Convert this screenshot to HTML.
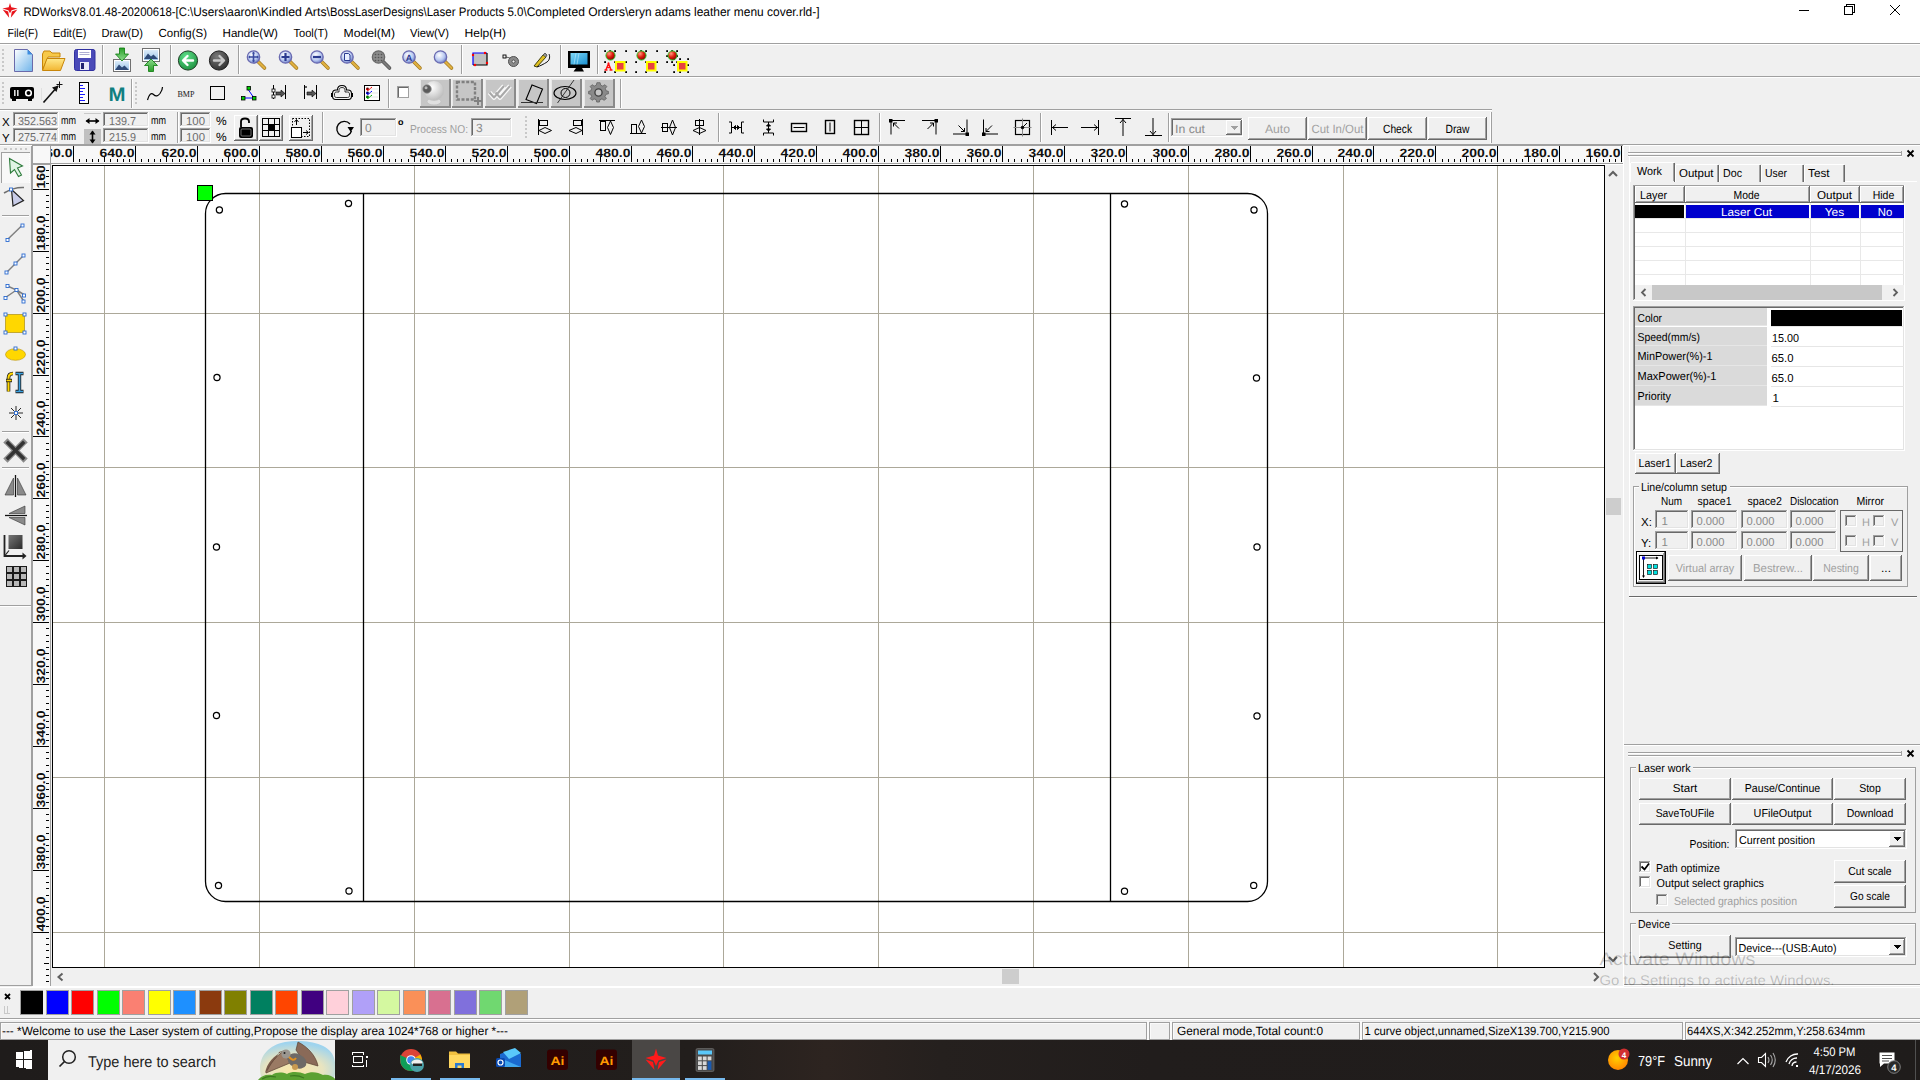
<!DOCTYPE html>
<html><head><meta charset="utf-8"><title>RDWorks</title>
<style>
html,body{margin:0;padding:0;width:1920px;height:1080px;overflow:hidden;background:#f0f0f0;}
svg{display:block;font-family:"Liberation Sans",sans-serif;}

</style></head>
<body>
<svg width="1920" height="1080" viewBox="0 0 1920 1080" shape-rendering="crispEdges" text-rendering="geometricPrecision">
<rect x="0" y="0" width="1920" height="1080" fill="#f0f0f0" />
<rect x="0" y="0" width="1920" height="42" fill="#ffffff" />
<g fill="#e8141b" shape-rendering="geometricPrecision"><path d="M10 3 L11.3 7.2 L17.6 8.6 L11.6 10.2 L10 13.2 L8.4 10.2 L2.4 8.6 L8.7 7.2 Z"/><path d="M2.6 9.6 L8.2 11.4 L9.2 17.8 Z"/><path d="M17.4 9.6 L11.8 11.4 L10.8 17.8 Z"/></g>
<text x="23.4" y="16" font-size="12.4" fill="#000" textLength="169.9" lengthAdjust="spacingAndGlyphs" >RDWorksV8.01.48-20200618-[C:\</text>
<text x="193.3" y="16" font-size="12.4" fill="#000" textLength="67.5" lengthAdjust="spacingAndGlyphs" >Users\aaron\</text>
<text x="260.8" y="16" font-size="12.4" fill="#000" textLength="69.2" lengthAdjust="spacingAndGlyphs" >Kindled Arts\</text>
<text x="330" y="16" font-size="12.4" fill="#000" textLength="96.7" lengthAdjust="spacingAndGlyphs" >BossLaserDesigns\</text>
<text x="426.7" y="16" font-size="12.4" fill="#000" textLength="100.0" lengthAdjust="spacingAndGlyphs" >Laser Products 5.0\</text>
<text x="526.7" y="16" font-size="12.4" fill="#000" textLength="101.6" lengthAdjust="spacingAndGlyphs" >Completed Orders\</text>
<text x="628.3" y="16" font-size="12.4" fill="#000" textLength="191.2" lengthAdjust="spacingAndGlyphs" >eryn adams leather menu cover.rld-]</text>
<g stroke="#000" stroke-width="1" fill="none"><path d="M1799 10.5 H1809"/><rect x="1844.5" y="6.5" width="8" height="8" fill="#fff"/><path d="M1846.5 6.5 V4.5 H1854.5 V12.5 H1852.5"/></g>
<g stroke="#000" stroke-width="1" shape-rendering="geometricPrecision"><path d="M1890 5 L1900 15 M1900 5 L1890 15"/></g>
<text x="7.5" y="36.5" font-size="11.8" fill="#000" textLength="30.5" lengthAdjust="spacingAndGlyphs" >File(F)</text>
<text x="53" y="36.5" font-size="11.8" fill="#000" textLength="33.5" lengthAdjust="spacingAndGlyphs" >Edit(E)</text>
<text x="101.5" y="36.5" font-size="11.8" fill="#000" textLength="41.5" lengthAdjust="spacingAndGlyphs" >Draw(D)</text>
<text x="158.5" y="36.5" font-size="11.8" fill="#000" textLength="48.5" lengthAdjust="spacingAndGlyphs" >Config(S)</text>
<text x="222.5" y="36.5" font-size="11.8" fill="#000" textLength="55.5" lengthAdjust="spacingAndGlyphs" >Handle(W)</text>
<text x="293.5" y="36.5" font-size="11.8" fill="#000" textLength="34.5" lengthAdjust="spacingAndGlyphs" >Tool(T)</text>
<text x="343.5" y="36.5" font-size="11.8" fill="#000" textLength="51.5" lengthAdjust="spacingAndGlyphs" >Model(M)</text>
<text x="410" y="36.5" font-size="11.8" fill="#000" textLength="39" lengthAdjust="spacingAndGlyphs" >View(V)</text>
<text x="464.5" y="36.5" font-size="11.8" fill="#000" textLength="41.5" lengthAdjust="spacingAndGlyphs" >Help(H)</text>
<rect x="0" y="42" width="1920" height="1" fill="#ffffff"/>
<rect x="0" y="43" width="1920" height="1" fill="#a0a0a0"/>
<rect x="0" y="44" width="1920" height="1" fill="#ffffff"/>
<rect x="0" y="76" width="1920" height="1" fill="#a0a0a0"/>
<rect x="0" y="77" width="1920" height="1" fill="#ffffff"/>
<rect x="0" y="109" width="1492" height="1" fill="#a0a0a0"/>
<rect x="0" y="110" width="1492" height="1" fill="#ffffff"/>
<rect x="0" y="144" width="1920" height="1" fill="#a0a0a0"/>
<rect x="0" y="145" width="1920" height="1" fill="#ffffff"/>
<rect x="31" y="146" width="1" height="840" fill="#a0a0a0"/>
<rect x="0" y="605" width="31" height="1" fill="#a0a0a0"/>
<rect x="0" y="606" width="31" height="1" fill="#ffffff"/>
<rect x="32" y="145" width="19" height="19" fill="#f8f8f8" />
<rect x="32" y="145" width="19" height="1" fill="#a0a0a0"/>
<rect x="32" y="145" width="1" height="19" fill="#a0a0a0"/>
<rect x="32" y="163" width="19" height="1" fill="#a0a0a0"/>
<rect x="32" y="164" width="19" height="1" fill="#ffffff"/>
<rect x="51" y="146" width="1572" height="17" fill="#f8f8f8" />
<rect x="51" y="145" width="1572" height="1" fill="#a0a0a0"/>
<rect x="50" y="145" width="1" height="19" fill="#a0a0a0"/>
<rect x="51" y="163" width="1572" height="1" fill="#a0a0a0"/>
<rect x="51" y="164" width="1572" height="1" fill="#ffffff"/>
<rect x="1623" y="145" width="1" height="19" fill="#ffffff"/>
<defs><clipPath id="hrc"><rect x="51" y="146" width="1572" height="17"/></clipPath><clipPath id="hrl"><rect x="52" y="146" width="1571" height="17"/></clipPath><clipPath id="vrc"><rect x="33" y="166" width="17" height="819"/></clipPath><clipPath id="cvc"><rect x="53" y="166" width="1551" height="801"/></clipPath></defs>
<g clip-path="url(#hrc)">
<rect x="73" y="146" width="1" height="16" fill="#000"/>
<rect x="79" y="159" width="1" height="3" fill="#000"/>
<rect x="86" y="159" width="1" height="3" fill="#000"/>
<rect x="92" y="159" width="1" height="3" fill="#000"/>
<rect x="98" y="159" width="1" height="3" fill="#000"/>
<rect x="104" y="156" width="1" height="6" fill="#000"/>
<rect x="110" y="159" width="1" height="3" fill="#000"/>
<rect x="117" y="159" width="1" height="3" fill="#000"/>
<rect x="123" y="159" width="1" height="3" fill="#000"/>
<rect x="129" y="159" width="1" height="3" fill="#000"/>
<rect x="135" y="146" width="1" height="16" fill="#000"/>
<rect x="141" y="159" width="1" height="3" fill="#000"/>
<rect x="148" y="159" width="1" height="3" fill="#000"/>
<rect x="154" y="159" width="1" height="3" fill="#000"/>
<rect x="160" y="159" width="1" height="3" fill="#000"/>
<rect x="166" y="156" width="1" height="6" fill="#000"/>
<rect x="172" y="159" width="1" height="3" fill="#000"/>
<rect x="179" y="159" width="1" height="3" fill="#000"/>
<rect x="185" y="159" width="1" height="3" fill="#000"/>
<rect x="191" y="159" width="1" height="3" fill="#000"/>
<rect x="197" y="146" width="1" height="16" fill="#000"/>
<rect x="203" y="159" width="1" height="3" fill="#000"/>
<rect x="209" y="159" width="1" height="3" fill="#000"/>
<rect x="216" y="159" width="1" height="3" fill="#000"/>
<rect x="222" y="159" width="1" height="3" fill="#000"/>
<rect x="228" y="156" width="1" height="6" fill="#000"/>
<rect x="234" y="159" width="1" height="3" fill="#000"/>
<rect x="240" y="159" width="1" height="3" fill="#000"/>
<rect x="247" y="159" width="1" height="3" fill="#000"/>
<rect x="253" y="159" width="1" height="3" fill="#000"/>
<rect x="259" y="146" width="1" height="16" fill="#000"/>
<rect x="265" y="159" width="1" height="3" fill="#000"/>
<rect x="271" y="159" width="1" height="3" fill="#000"/>
<rect x="278" y="159" width="1" height="3" fill="#000"/>
<rect x="284" y="159" width="1" height="3" fill="#000"/>
<rect x="290" y="156" width="1" height="6" fill="#000"/>
<rect x="296" y="159" width="1" height="3" fill="#000"/>
<rect x="302" y="159" width="1" height="3" fill="#000"/>
<rect x="309" y="159" width="1" height="3" fill="#000"/>
<rect x="315" y="159" width="1" height="3" fill="#000"/>
<rect x="321" y="146" width="1" height="16" fill="#000"/>
<rect x="327" y="159" width="1" height="3" fill="#000"/>
<rect x="333" y="159" width="1" height="3" fill="#000"/>
<rect x="340" y="159" width="1" height="3" fill="#000"/>
<rect x="346" y="159" width="1" height="3" fill="#000"/>
<rect x="352" y="156" width="1" height="6" fill="#000"/>
<rect x="358" y="159" width="1" height="3" fill="#000"/>
<rect x="364" y="159" width="1" height="3" fill="#000"/>
<rect x="370" y="159" width="1" height="3" fill="#000"/>
<rect x="377" y="159" width="1" height="3" fill="#000"/>
<rect x="383" y="146" width="1" height="16" fill="#000"/>
<rect x="389" y="159" width="1" height="3" fill="#000"/>
<rect x="395" y="159" width="1" height="3" fill="#000"/>
<rect x="401" y="159" width="1" height="3" fill="#000"/>
<rect x="408" y="159" width="1" height="3" fill="#000"/>
<rect x="414" y="156" width="1" height="6" fill="#000"/>
<rect x="420" y="159" width="1" height="3" fill="#000"/>
<rect x="426" y="159" width="1" height="3" fill="#000"/>
<rect x="432" y="159" width="1" height="3" fill="#000"/>
<rect x="439" y="159" width="1" height="3" fill="#000"/>
<rect x="445" y="146" width="1" height="16" fill="#000"/>
<rect x="451" y="159" width="1" height="3" fill="#000"/>
<rect x="457" y="159" width="1" height="3" fill="#000"/>
<rect x="463" y="159" width="1" height="3" fill="#000"/>
<rect x="470" y="159" width="1" height="3" fill="#000"/>
<rect x="476" y="156" width="1" height="6" fill="#000"/>
<rect x="482" y="159" width="1" height="3" fill="#000"/>
<rect x="488" y="159" width="1" height="3" fill="#000"/>
<rect x="494" y="159" width="1" height="3" fill="#000"/>
<rect x="500" y="159" width="1" height="3" fill="#000"/>
<rect x="507" y="146" width="1" height="16" fill="#000"/>
<rect x="513" y="159" width="1" height="3" fill="#000"/>
<rect x="519" y="159" width="1" height="3" fill="#000"/>
<rect x="525" y="159" width="1" height="3" fill="#000"/>
<rect x="531" y="159" width="1" height="3" fill="#000"/>
<rect x="538" y="156" width="1" height="6" fill="#000"/>
<rect x="544" y="159" width="1" height="3" fill="#000"/>
<rect x="550" y="159" width="1" height="3" fill="#000"/>
<rect x="556" y="159" width="1" height="3" fill="#000"/>
<rect x="562" y="159" width="1" height="3" fill="#000"/>
<rect x="569" y="146" width="1" height="16" fill="#000"/>
<rect x="575" y="159" width="1" height="3" fill="#000"/>
<rect x="581" y="159" width="1" height="3" fill="#000"/>
<rect x="587" y="159" width="1" height="3" fill="#000"/>
<rect x="593" y="159" width="1" height="3" fill="#000"/>
<rect x="600" y="156" width="1" height="6" fill="#000"/>
<rect x="606" y="159" width="1" height="3" fill="#000"/>
<rect x="612" y="159" width="1" height="3" fill="#000"/>
<rect x="618" y="159" width="1" height="3" fill="#000"/>
<rect x="624" y="159" width="1" height="3" fill="#000"/>
<rect x="631" y="146" width="1" height="16" fill="#000"/>
<rect x="637" y="159" width="1" height="3" fill="#000"/>
<rect x="643" y="159" width="1" height="3" fill="#000"/>
<rect x="649" y="159" width="1" height="3" fill="#000"/>
<rect x="655" y="159" width="1" height="3" fill="#000"/>
<rect x="661" y="156" width="1" height="6" fill="#000"/>
<rect x="668" y="159" width="1" height="3" fill="#000"/>
<rect x="674" y="159" width="1" height="3" fill="#000"/>
<rect x="680" y="159" width="1" height="3" fill="#000"/>
<rect x="686" y="159" width="1" height="3" fill="#000"/>
<rect x="692" y="146" width="1" height="16" fill="#000"/>
<rect x="699" y="159" width="1" height="3" fill="#000"/>
<rect x="705" y="159" width="1" height="3" fill="#000"/>
<rect x="711" y="159" width="1" height="3" fill="#000"/>
<rect x="717" y="159" width="1" height="3" fill="#000"/>
<rect x="723" y="156" width="1" height="6" fill="#000"/>
<rect x="730" y="159" width="1" height="3" fill="#000"/>
<rect x="736" y="159" width="1" height="3" fill="#000"/>
<rect x="742" y="159" width="1" height="3" fill="#000"/>
<rect x="748" y="159" width="1" height="3" fill="#000"/>
<rect x="754" y="146" width="1" height="16" fill="#000"/>
<rect x="761" y="159" width="1" height="3" fill="#000"/>
<rect x="767" y="159" width="1" height="3" fill="#000"/>
<rect x="773" y="159" width="1" height="3" fill="#000"/>
<rect x="779" y="159" width="1" height="3" fill="#000"/>
<rect x="785" y="156" width="1" height="6" fill="#000"/>
<rect x="791" y="159" width="1" height="3" fill="#000"/>
<rect x="798" y="159" width="1" height="3" fill="#000"/>
<rect x="804" y="159" width="1" height="3" fill="#000"/>
<rect x="810" y="159" width="1" height="3" fill="#000"/>
<rect x="816" y="146" width="1" height="16" fill="#000"/>
<rect x="822" y="159" width="1" height="3" fill="#000"/>
<rect x="829" y="159" width="1" height="3" fill="#000"/>
<rect x="835" y="159" width="1" height="3" fill="#000"/>
<rect x="841" y="159" width="1" height="3" fill="#000"/>
<rect x="847" y="156" width="1" height="6" fill="#000"/>
<rect x="853" y="159" width="1" height="3" fill="#000"/>
<rect x="860" y="159" width="1" height="3" fill="#000"/>
<rect x="866" y="159" width="1" height="3" fill="#000"/>
<rect x="872" y="159" width="1" height="3" fill="#000"/>
<rect x="878" y="146" width="1" height="16" fill="#000"/>
<rect x="884" y="159" width="1" height="3" fill="#000"/>
<rect x="891" y="159" width="1" height="3" fill="#000"/>
<rect x="897" y="159" width="1" height="3" fill="#000"/>
<rect x="903" y="159" width="1" height="3" fill="#000"/>
<rect x="909" y="156" width="1" height="6" fill="#000"/>
<rect x="915" y="159" width="1" height="3" fill="#000"/>
<rect x="922" y="159" width="1" height="3" fill="#000"/>
<rect x="928" y="159" width="1" height="3" fill="#000"/>
<rect x="934" y="159" width="1" height="3" fill="#000"/>
<rect x="940" y="146" width="1" height="16" fill="#000"/>
<rect x="946" y="159" width="1" height="3" fill="#000"/>
<rect x="952" y="159" width="1" height="3" fill="#000"/>
<rect x="959" y="159" width="1" height="3" fill="#000"/>
<rect x="965" y="159" width="1" height="3" fill="#000"/>
<rect x="971" y="156" width="1" height="6" fill="#000"/>
<rect x="977" y="159" width="1" height="3" fill="#000"/>
<rect x="983" y="159" width="1" height="3" fill="#000"/>
<rect x="990" y="159" width="1" height="3" fill="#000"/>
<rect x="996" y="159" width="1" height="3" fill="#000"/>
<rect x="1002" y="146" width="1" height="16" fill="#000"/>
<rect x="1008" y="159" width="1" height="3" fill="#000"/>
<rect x="1014" y="159" width="1" height="3" fill="#000"/>
<rect x="1021" y="159" width="1" height="3" fill="#000"/>
<rect x="1027" y="159" width="1" height="3" fill="#000"/>
<rect x="1033" y="156" width="1" height="6" fill="#000"/>
<rect x="1039" y="159" width="1" height="3" fill="#000"/>
<rect x="1045" y="159" width="1" height="3" fill="#000"/>
<rect x="1052" y="159" width="1" height="3" fill="#000"/>
<rect x="1058" y="159" width="1" height="3" fill="#000"/>
<rect x="1064" y="146" width="1" height="16" fill="#000"/>
<rect x="1070" y="159" width="1" height="3" fill="#000"/>
<rect x="1076" y="159" width="1" height="3" fill="#000"/>
<rect x="1082" y="159" width="1" height="3" fill="#000"/>
<rect x="1089" y="159" width="1" height="3" fill="#000"/>
<rect x="1095" y="156" width="1" height="6" fill="#000"/>
<rect x="1101" y="159" width="1" height="3" fill="#000"/>
<rect x="1107" y="159" width="1" height="3" fill="#000"/>
<rect x="1113" y="159" width="1" height="3" fill="#000"/>
<rect x="1120" y="159" width="1" height="3" fill="#000"/>
<rect x="1126" y="146" width="1" height="16" fill="#000"/>
<rect x="1132" y="159" width="1" height="3" fill="#000"/>
<rect x="1138" y="159" width="1" height="3" fill="#000"/>
<rect x="1144" y="159" width="1" height="3" fill="#000"/>
<rect x="1151" y="159" width="1" height="3" fill="#000"/>
<rect x="1157" y="156" width="1" height="6" fill="#000"/>
<rect x="1163" y="159" width="1" height="3" fill="#000"/>
<rect x="1169" y="159" width="1" height="3" fill="#000"/>
<rect x="1175" y="159" width="1" height="3" fill="#000"/>
<rect x="1182" y="159" width="1" height="3" fill="#000"/>
<rect x="1188" y="146" width="1" height="16" fill="#000"/>
<rect x="1194" y="159" width="1" height="3" fill="#000"/>
<rect x="1200" y="159" width="1" height="3" fill="#000"/>
<rect x="1206" y="159" width="1" height="3" fill="#000"/>
<rect x="1212" y="159" width="1" height="3" fill="#000"/>
<rect x="1219" y="156" width="1" height="6" fill="#000"/>
<rect x="1225" y="159" width="1" height="3" fill="#000"/>
<rect x="1231" y="159" width="1" height="3" fill="#000"/>
<rect x="1237" y="159" width="1" height="3" fill="#000"/>
<rect x="1243" y="159" width="1" height="3" fill="#000"/>
<rect x="1250" y="146" width="1" height="16" fill="#000"/>
<rect x="1256" y="159" width="1" height="3" fill="#000"/>
<rect x="1262" y="159" width="1" height="3" fill="#000"/>
<rect x="1268" y="159" width="1" height="3" fill="#000"/>
<rect x="1274" y="159" width="1" height="3" fill="#000"/>
<rect x="1281" y="156" width="1" height="6" fill="#000"/>
<rect x="1287" y="159" width="1" height="3" fill="#000"/>
<rect x="1293" y="159" width="1" height="3" fill="#000"/>
<rect x="1299" y="159" width="1" height="3" fill="#000"/>
<rect x="1305" y="159" width="1" height="3" fill="#000"/>
<rect x="1312" y="146" width="1" height="16" fill="#000"/>
<rect x="1318" y="159" width="1" height="3" fill="#000"/>
<rect x="1324" y="159" width="1" height="3" fill="#000"/>
<rect x="1330" y="159" width="1" height="3" fill="#000"/>
<rect x="1336" y="159" width="1" height="3" fill="#000"/>
<rect x="1343" y="156" width="1" height="6" fill="#000"/>
<rect x="1349" y="159" width="1" height="3" fill="#000"/>
<rect x="1355" y="159" width="1" height="3" fill="#000"/>
<rect x="1361" y="159" width="1" height="3" fill="#000"/>
<rect x="1367" y="159" width="1" height="3" fill="#000"/>
<rect x="1373" y="146" width="1" height="16" fill="#000"/>
<rect x="1380" y="159" width="1" height="3" fill="#000"/>
<rect x="1386" y="159" width="1" height="3" fill="#000"/>
<rect x="1392" y="159" width="1" height="3" fill="#000"/>
<rect x="1398" y="159" width="1" height="3" fill="#000"/>
<rect x="1404" y="156" width="1" height="6" fill="#000"/>
<rect x="1411" y="159" width="1" height="3" fill="#000"/>
<rect x="1417" y="159" width="1" height="3" fill="#000"/>
<rect x="1423" y="159" width="1" height="3" fill="#000"/>
<rect x="1429" y="159" width="1" height="3" fill="#000"/>
<rect x="1435" y="146" width="1" height="16" fill="#000"/>
<rect x="1442" y="159" width="1" height="3" fill="#000"/>
<rect x="1448" y="159" width="1" height="3" fill="#000"/>
<rect x="1454" y="159" width="1" height="3" fill="#000"/>
<rect x="1460" y="159" width="1" height="3" fill="#000"/>
<rect x="1466" y="156" width="1" height="6" fill="#000"/>
<rect x="1473" y="159" width="1" height="3" fill="#000"/>
<rect x="1479" y="159" width="1" height="3" fill="#000"/>
<rect x="1485" y="159" width="1" height="3" fill="#000"/>
<rect x="1491" y="159" width="1" height="3" fill="#000"/>
<rect x="1497" y="146" width="1" height="16" fill="#000"/>
<rect x="1503" y="159" width="1" height="3" fill="#000"/>
<rect x="1510" y="159" width="1" height="3" fill="#000"/>
<rect x="1516" y="159" width="1" height="3" fill="#000"/>
<rect x="1522" y="159" width="1" height="3" fill="#000"/>
<rect x="1528" y="156" width="1" height="6" fill="#000"/>
<rect x="1534" y="159" width="1" height="3" fill="#000"/>
<rect x="1541" y="159" width="1" height="3" fill="#000"/>
<rect x="1547" y="159" width="1" height="3" fill="#000"/>
<rect x="1553" y="159" width="1" height="3" fill="#000"/>
<rect x="1559" y="146" width="1" height="16" fill="#000"/>
<rect x="1565" y="159" width="1" height="3" fill="#000"/>
<rect x="1572" y="159" width="1" height="3" fill="#000"/>
<rect x="1578" y="159" width="1" height="3" fill="#000"/>
<rect x="1584" y="159" width="1" height="3" fill="#000"/>
<rect x="1590" y="156" width="1" height="6" fill="#000"/>
<rect x="1596" y="159" width="1" height="3" fill="#000"/>
<rect x="1603" y="159" width="1" height="3" fill="#000"/>
<rect x="1609" y="159" width="1" height="3" fill="#000"/>
<rect x="1615" y="159" width="1" height="3" fill="#000"/>
<rect x="1621" y="146" width="1" height="16" fill="#000"/>
<rect x="1627" y="159" width="1" height="3" fill="#000"/>
<rect x="1634" y="159" width="1" height="3" fill="#000"/>
<rect x="1640" y="159" width="1" height="3" fill="#000"/>
<rect x="1646" y="159" width="1" height="3" fill="#000"/>
<rect x="1652" y="156" width="1" height="6" fill="#000"/>
<text x="72.5" y="157" font-size="12" font-weight="bold" fill="#111" text-anchor="end" textLength="35" lengthAdjust="spacingAndGlyphs">660.0</text>
<text x="134.5" y="157" font-size="12" font-weight="bold" fill="#111" text-anchor="end" textLength="35" lengthAdjust="spacingAndGlyphs">640.0</text>
<text x="196.5" y="157" font-size="12" font-weight="bold" fill="#111" text-anchor="end" textLength="35" lengthAdjust="spacingAndGlyphs">620.0</text>
<text x="258.5" y="157" font-size="12" font-weight="bold" fill="#111" text-anchor="end" textLength="35" lengthAdjust="spacingAndGlyphs">600.0</text>
<text x="320.5" y="157" font-size="12" font-weight="bold" fill="#111" text-anchor="end" textLength="35" lengthAdjust="spacingAndGlyphs">580.0</text>
<text x="382.5" y="157" font-size="12" font-weight="bold" fill="#111" text-anchor="end" textLength="35" lengthAdjust="spacingAndGlyphs">560.0</text>
<text x="444.5" y="157" font-size="12" font-weight="bold" fill="#111" text-anchor="end" textLength="35" lengthAdjust="spacingAndGlyphs">540.0</text>
<text x="506.5" y="157" font-size="12" font-weight="bold" fill="#111" text-anchor="end" textLength="35" lengthAdjust="spacingAndGlyphs">520.0</text>
<text x="568.5" y="157" font-size="12" font-weight="bold" fill="#111" text-anchor="end" textLength="35" lengthAdjust="spacingAndGlyphs">500.0</text>
<text x="630.5" y="157" font-size="12" font-weight="bold" fill="#111" text-anchor="end" textLength="35" lengthAdjust="spacingAndGlyphs">480.0</text>
<text x="691.5" y="157" font-size="12" font-weight="bold" fill="#111" text-anchor="end" textLength="35" lengthAdjust="spacingAndGlyphs">460.0</text>
<text x="753.5" y="157" font-size="12" font-weight="bold" fill="#111" text-anchor="end" textLength="35" lengthAdjust="spacingAndGlyphs">440.0</text>
<text x="815.5" y="157" font-size="12" font-weight="bold" fill="#111" text-anchor="end" textLength="35" lengthAdjust="spacingAndGlyphs">420.0</text>
<text x="877.5" y="157" font-size="12" font-weight="bold" fill="#111" text-anchor="end" textLength="35" lengthAdjust="spacingAndGlyphs">400.0</text>
<text x="939.5" y="157" font-size="12" font-weight="bold" fill="#111" text-anchor="end" textLength="35" lengthAdjust="spacingAndGlyphs">380.0</text>
<text x="1001.5" y="157" font-size="12" font-weight="bold" fill="#111" text-anchor="end" textLength="35" lengthAdjust="spacingAndGlyphs">360.0</text>
<text x="1063.5" y="157" font-size="12" font-weight="bold" fill="#111" text-anchor="end" textLength="35" lengthAdjust="spacingAndGlyphs">340.0</text>
<text x="1125.5" y="157" font-size="12" font-weight="bold" fill="#111" text-anchor="end" textLength="35" lengthAdjust="spacingAndGlyphs">320.0</text>
<text x="1187.5" y="157" font-size="12" font-weight="bold" fill="#111" text-anchor="end" textLength="35" lengthAdjust="spacingAndGlyphs">300.0</text>
<text x="1249.5" y="157" font-size="12" font-weight="bold" fill="#111" text-anchor="end" textLength="35" lengthAdjust="spacingAndGlyphs">280.0</text>
<text x="1311.5" y="157" font-size="12" font-weight="bold" fill="#111" text-anchor="end" textLength="35" lengthAdjust="spacingAndGlyphs">260.0</text>
<text x="1372.5" y="157" font-size="12" font-weight="bold" fill="#111" text-anchor="end" textLength="35" lengthAdjust="spacingAndGlyphs">240.0</text>
<text x="1434.5" y="157" font-size="12" font-weight="bold" fill="#111" text-anchor="end" textLength="35" lengthAdjust="spacingAndGlyphs">220.0</text>
<text x="1496.5" y="157" font-size="12" font-weight="bold" fill="#111" text-anchor="end" textLength="35" lengthAdjust="spacingAndGlyphs">200.0</text>
<text x="1558.5" y="157" font-size="12" font-weight="bold" fill="#111" text-anchor="end" textLength="35" lengthAdjust="spacingAndGlyphs">180.0</text>
<text x="1620.5" y="157" font-size="12" font-weight="bold" fill="#111" text-anchor="end" textLength="35" lengthAdjust="spacingAndGlyphs">160.0</text>
</g>
<rect x="33" y="165" width="17" height="821" fill="#f8f8f8" />
<rect x="32" y="164" width="1" height="822" fill="#a0a0a0"/>
<rect x="32" y="164" width="19" height="1" fill="#a0a0a0"/>
<rect x="50" y="164" width="1" height="822" fill="#a0a0a0"/>
<rect x="51" y="164" width="1" height="822" fill="#f0f0f0"/>
<g clip-path="url(#vrc)">
<rect x="46" y="164" width="3" height="1" fill="#000"/>
<rect x="46" y="170" width="3" height="1" fill="#000"/>
<rect x="46" y="176" width="3" height="1" fill="#000"/>
<rect x="46" y="183" width="3" height="1" fill="#000"/>
<rect x="33" y="189" width="16" height="1" fill="#000"/>
<rect x="46" y="195" width="3" height="1" fill="#000"/>
<rect x="46" y="201" width="3" height="1" fill="#000"/>
<rect x="46" y="207" width="3" height="1" fill="#000"/>
<rect x="46" y="214" width="3" height="1" fill="#000"/>
<rect x="44" y="220" width="5" height="1" fill="#000"/>
<rect x="46" y="226" width="3" height="1" fill="#000"/>
<rect x="46" y="232" width="3" height="1" fill="#000"/>
<rect x="46" y="238" width="3" height="1" fill="#000"/>
<rect x="46" y="245" width="3" height="1" fill="#000"/>
<rect x="33" y="251" width="16" height="1" fill="#000"/>
<rect x="46" y="257" width="3" height="1" fill="#000"/>
<rect x="46" y="263" width="3" height="1" fill="#000"/>
<rect x="46" y="269" width="3" height="1" fill="#000"/>
<rect x="46" y="275" width="3" height="1" fill="#000"/>
<rect x="44" y="282" width="5" height="1" fill="#000"/>
<rect x="46" y="288" width="3" height="1" fill="#000"/>
<rect x="46" y="294" width="3" height="1" fill="#000"/>
<rect x="46" y="300" width="3" height="1" fill="#000"/>
<rect x="46" y="306" width="3" height="1" fill="#000"/>
<rect x="33" y="313" width="16" height="1" fill="#000"/>
<rect x="46" y="319" width="3" height="1" fill="#000"/>
<rect x="46" y="325" width="3" height="1" fill="#000"/>
<rect x="46" y="331" width="3" height="1" fill="#000"/>
<rect x="46" y="337" width="3" height="1" fill="#000"/>
<rect x="44" y="344" width="5" height="1" fill="#000"/>
<rect x="46" y="350" width="3" height="1" fill="#000"/>
<rect x="46" y="356" width="3" height="1" fill="#000"/>
<rect x="46" y="362" width="3" height="1" fill="#000"/>
<rect x="46" y="368" width="3" height="1" fill="#000"/>
<rect x="33" y="375" width="16" height="1" fill="#000"/>
<rect x="46" y="381" width="3" height="1" fill="#000"/>
<rect x="46" y="387" width="3" height="1" fill="#000"/>
<rect x="46" y="393" width="3" height="1" fill="#000"/>
<rect x="46" y="399" width="3" height="1" fill="#000"/>
<rect x="44" y="405" width="5" height="1" fill="#000"/>
<rect x="46" y="412" width="3" height="1" fill="#000"/>
<rect x="46" y="418" width="3" height="1" fill="#000"/>
<rect x="46" y="424" width="3" height="1" fill="#000"/>
<rect x="46" y="430" width="3" height="1" fill="#000"/>
<rect x="33" y="436" width="16" height="1" fill="#000"/>
<rect x="46" y="443" width="3" height="1" fill="#000"/>
<rect x="46" y="449" width="3" height="1" fill="#000"/>
<rect x="46" y="455" width="3" height="1" fill="#000"/>
<rect x="46" y="461" width="3" height="1" fill="#000"/>
<rect x="44" y="467" width="5" height="1" fill="#000"/>
<rect x="46" y="474" width="3" height="1" fill="#000"/>
<rect x="46" y="480" width="3" height="1" fill="#000"/>
<rect x="46" y="486" width="3" height="1" fill="#000"/>
<rect x="46" y="492" width="3" height="1" fill="#000"/>
<rect x="33" y="498" width="16" height="1" fill="#000"/>
<rect x="46" y="505" width="3" height="1" fill="#000"/>
<rect x="46" y="511" width="3" height="1" fill="#000"/>
<rect x="46" y="517" width="3" height="1" fill="#000"/>
<rect x="46" y="523" width="3" height="1" fill="#000"/>
<rect x="44" y="529" width="5" height="1" fill="#000"/>
<rect x="46" y="536" width="3" height="1" fill="#000"/>
<rect x="46" y="542" width="3" height="1" fill="#000"/>
<rect x="46" y="548" width="3" height="1" fill="#000"/>
<rect x="46" y="554" width="3" height="1" fill="#000"/>
<rect x="33" y="560" width="16" height="1" fill="#000"/>
<rect x="46" y="566" width="3" height="1" fill="#000"/>
<rect x="46" y="573" width="3" height="1" fill="#000"/>
<rect x="46" y="579" width="3" height="1" fill="#000"/>
<rect x="46" y="585" width="3" height="1" fill="#000"/>
<rect x="44" y="591" width="5" height="1" fill="#000"/>
<rect x="46" y="597" width="3" height="1" fill="#000"/>
<rect x="46" y="604" width="3" height="1" fill="#000"/>
<rect x="46" y="610" width="3" height="1" fill="#000"/>
<rect x="46" y="616" width="3" height="1" fill="#000"/>
<rect x="33" y="622" width="16" height="1" fill="#000"/>
<rect x="46" y="628" width="3" height="1" fill="#000"/>
<rect x="46" y="635" width="3" height="1" fill="#000"/>
<rect x="46" y="641" width="3" height="1" fill="#000"/>
<rect x="46" y="647" width="3" height="1" fill="#000"/>
<rect x="44" y="653" width="5" height="1" fill="#000"/>
<rect x="46" y="659" width="3" height="1" fill="#000"/>
<rect x="46" y="666" width="3" height="1" fill="#000"/>
<rect x="46" y="672" width="3" height="1" fill="#000"/>
<rect x="46" y="678" width="3" height="1" fill="#000"/>
<rect x="33" y="684" width="16" height="1" fill="#000"/>
<rect x="46" y="690" width="3" height="1" fill="#000"/>
<rect x="46" y="696" width="3" height="1" fill="#000"/>
<rect x="46" y="703" width="3" height="1" fill="#000"/>
<rect x="46" y="709" width="3" height="1" fill="#000"/>
<rect x="44" y="715" width="5" height="1" fill="#000"/>
<rect x="46" y="721" width="3" height="1" fill="#000"/>
<rect x="46" y="727" width="3" height="1" fill="#000"/>
<rect x="46" y="734" width="3" height="1" fill="#000"/>
<rect x="46" y="740" width="3" height="1" fill="#000"/>
<rect x="33" y="746" width="16" height="1" fill="#000"/>
<rect x="46" y="752" width="3" height="1" fill="#000"/>
<rect x="46" y="758" width="3" height="1" fill="#000"/>
<rect x="46" y="765" width="3" height="1" fill="#000"/>
<rect x="46" y="771" width="3" height="1" fill="#000"/>
<rect x="44" y="777" width="5" height="1" fill="#000"/>
<rect x="46" y="783" width="3" height="1" fill="#000"/>
<rect x="46" y="789" width="3" height="1" fill="#000"/>
<rect x="46" y="796" width="3" height="1" fill="#000"/>
<rect x="46" y="802" width="3" height="1" fill="#000"/>
<rect x="33" y="808" width="16" height="1" fill="#000"/>
<rect x="46" y="814" width="3" height="1" fill="#000"/>
<rect x="46" y="820" width="3" height="1" fill="#000"/>
<rect x="46" y="827" width="3" height="1" fill="#000"/>
<rect x="46" y="833" width="3" height="1" fill="#000"/>
<rect x="44" y="839" width="5" height="1" fill="#000"/>
<rect x="46" y="845" width="3" height="1" fill="#000"/>
<rect x="46" y="851" width="3" height="1" fill="#000"/>
<rect x="46" y="857" width="3" height="1" fill="#000"/>
<rect x="46" y="864" width="3" height="1" fill="#000"/>
<rect x="33" y="870" width="16" height="1" fill="#000"/>
<rect x="46" y="876" width="3" height="1" fill="#000"/>
<rect x="46" y="882" width="3" height="1" fill="#000"/>
<rect x="46" y="888" width="3" height="1" fill="#000"/>
<rect x="46" y="895" width="3" height="1" fill="#000"/>
<rect x="44" y="901" width="5" height="1" fill="#000"/>
<rect x="46" y="907" width="3" height="1" fill="#000"/>
<rect x="46" y="913" width="3" height="1" fill="#000"/>
<rect x="46" y="919" width="3" height="1" fill="#000"/>
<rect x="46" y="926" width="3" height="1" fill="#000"/>
<rect x="33" y="932" width="16" height="1" fill="#000"/>
<rect x="46" y="938" width="3" height="1" fill="#000"/>
<rect x="46" y="944" width="3" height="1" fill="#000"/>
<rect x="46" y="950" width="3" height="1" fill="#000"/>
<rect x="46" y="957" width="3" height="1" fill="#000"/>
<rect x="44" y="963" width="5" height="1" fill="#000"/>
<rect x="46" y="969" width="3" height="1" fill="#000"/>
<rect x="46" y="975" width="3" height="1" fill="#000"/>
<rect x="46" y="981" width="3" height="1" fill="#000"/>
<text transform="translate(44.5 188.5) rotate(-90)" font-size="12" font-weight="bold" fill="#111" textLength="35" lengthAdjust="spacingAndGlyphs">160.0</text>
<text transform="translate(44.5 250.5) rotate(-90)" font-size="12" font-weight="bold" fill="#111" textLength="35" lengthAdjust="spacingAndGlyphs">180.0</text>
<text transform="translate(44.5 312.5) rotate(-90)" font-size="12" font-weight="bold" fill="#111" textLength="35" lengthAdjust="spacingAndGlyphs">200.0</text>
<text transform="translate(44.5 374.5) rotate(-90)" font-size="12" font-weight="bold" fill="#111" textLength="35" lengthAdjust="spacingAndGlyphs">220.0</text>
<text transform="translate(44.5 435.5) rotate(-90)" font-size="12" font-weight="bold" fill="#111" textLength="35" lengthAdjust="spacingAndGlyphs">240.0</text>
<text transform="translate(44.5 497.5) rotate(-90)" font-size="12" font-weight="bold" fill="#111" textLength="35" lengthAdjust="spacingAndGlyphs">260.0</text>
<text transform="translate(44.5 559.5) rotate(-90)" font-size="12" font-weight="bold" fill="#111" textLength="35" lengthAdjust="spacingAndGlyphs">280.0</text>
<text transform="translate(44.5 621.5) rotate(-90)" font-size="12" font-weight="bold" fill="#111" textLength="35" lengthAdjust="spacingAndGlyphs">300.0</text>
<text transform="translate(44.5 683.5) rotate(-90)" font-size="12" font-weight="bold" fill="#111" textLength="35" lengthAdjust="spacingAndGlyphs">320.0</text>
<text transform="translate(44.5 745.5) rotate(-90)" font-size="12" font-weight="bold" fill="#111" textLength="35" lengthAdjust="spacingAndGlyphs">340.0</text>
<text transform="translate(44.5 807.5) rotate(-90)" font-size="12" font-weight="bold" fill="#111" textLength="35" lengthAdjust="spacingAndGlyphs">360.0</text>
<text transform="translate(44.5 869.5) rotate(-90)" font-size="12" font-weight="bold" fill="#111" textLength="35" lengthAdjust="spacingAndGlyphs">380.0</text>
<text transform="translate(44.5 931.5) rotate(-90)" font-size="12" font-weight="bold" fill="#111" textLength="35" lengthAdjust="spacingAndGlyphs">400.0</text>
</g>
<rect x="52" y="165" width="1553" height="803" fill="#000000" />
<rect x="53" y="166" width="1551" height="801" fill="#ffffff" />
<g clip-path="url(#cvc)">
<rect x="104" y="166" width="1" height="801" fill="#aca899"/>
<rect x="259" y="166" width="1" height="801" fill="#aca899"/>
<rect x="414" y="166" width="1" height="801" fill="#aca899"/>
<rect x="569" y="166" width="1" height="801" fill="#aca899"/>
<rect x="723" y="166" width="1" height="801" fill="#aca899"/>
<rect x="878" y="166" width="1" height="801" fill="#aca899"/>
<rect x="1033" y="166" width="1" height="801" fill="#aca899"/>
<rect x="1188" y="166" width="1" height="801" fill="#aca899"/>
<rect x="1343" y="166" width="1" height="801" fill="#aca899"/>
<rect x="1497" y="166" width="1" height="801" fill="#aca899"/>
<rect x="53" y="313" width="1551" height="1" fill="#aca899"/>
<rect x="53" y="467" width="1551" height="1" fill="#aca899"/>
<rect x="53" y="622" width="1551" height="1" fill="#aca899"/>
<rect x="53" y="777" width="1551" height="1" fill="#aca899"/>
<rect x="53" y="932" width="1551" height="1" fill="#aca899"/>
</g>
<g fill="none" stroke="#000" stroke-width="1.3" shape-rendering="geometricPrecision"><path d="M225.5 193.5 H1247.5 A20 20 0 0 1 1267.5 213.5 V881.5 A20 20 0 0 1 1247.5 901.5 H225.5 A20 20 0 0 1 205.5 881.5 V213.5 A20 20 0 0 1 225.5 193.5 Z"/><path d="M363.5 193.5 V901.5 M1110.5 193.5 V901.5"/></g>
<g fill="none" stroke="#000" stroke-width="1.2" shape-rendering="geometricPrecision"><circle cx="219.4" cy="210" r="3.1"/><circle cx="217" cy="377.5" r="3.1"/><circle cx="216.5" cy="547" r="3.1"/><circle cx="216.5" cy="715.5" r="3.1"/><circle cx="218.5" cy="885.5" r="3.1"/><circle cx="348.5" cy="203.5" r="3.1"/><circle cx="349" cy="891" r="3.1"/><circle cx="1124.5" cy="204" r="3.1"/><circle cx="1124.5" cy="891.3" r="3.1"/><circle cx="1254" cy="210" r="3.1"/><circle cx="1256.5" cy="378" r="3.1"/><circle cx="1257" cy="547" r="3.1"/><circle cx="1257" cy="716" r="3.1"/><circle cx="1253.7" cy="885.4" r="3.1"/></g>
<rect x="197.5" y="185.5" width="15" height="15" fill="#00ff00" stroke="#000" stroke-width="1.2" />
<rect x="1605" y="166" width="18" height="802" fill="#f0f0f0" />
<rect x="1606" y="498" width="15" height="17" fill="#cdcdcd" />
<path d="M1609 176 L1613 172 L1617 176" fill="none" stroke="#606060" stroke-width="2" shape-rendering="geometricPrecision"/>
<path d="M1609 957 L1613 961 L1617 957" fill="none" stroke="#606060" stroke-width="2" shape-rendering="geometricPrecision"/>
<rect x="52" y="968" width="1553" height="18" fill="#f0f0f0" />
<rect x="1002" y="969" width="17" height="15" fill="#cdcdcd" />
<path d="M62.5 973.5 L58.5 977 L62.5 980.5" fill="none" stroke="#606060" stroke-width="2" shape-rendering="geometricPrecision"/>
<path d="M1594 973 L1598 977 L1594 981" fill="none" stroke="#606060" stroke-width="2" shape-rendering="geometricPrecision"/>
<rect x="32" y="986" width="1592" height="1" fill="#ffffff"/>
<rect x="0" y="985" width="32" height="1" fill="#a0a0a0"/>
<defs><linearGradient id="gDoc" x1="0" y1="0" x2="1" y2="1"><stop offset="0" stop-color="#ffffff"/><stop offset="1" stop-color="#6fb4ea"/></linearGradient><linearGradient id="gFold" x1="0" y1="0" x2="0" y2="1"><stop offset="0" stop-color="#ffe98a"/><stop offset="1" stop-color="#f2b632"/></linearGradient><radialGradient id="gLens" cx="0.4" cy="0.35" r="0.7"><stop offset="0" stop-color="#ffffff"/><stop offset="0.6" stop-color="#b8c8f0"/><stop offset="1" stop-color="#6070c0"/></radialGradient><radialGradient id="gGreen" cx="0.4" cy="0.3" r="0.8"><stop offset="0" stop-color="#5ee08a"/><stop offset="1" stop-color="#1a8a3a"/></radialGradient><radialGradient id="gDark" cx="0.4" cy="0.3" r="0.8"><stop offset="0" stop-color="#7a7a7a"/><stop offset="1" stop-color="#2a2a2a"/></radialGradient><radialGradient id="gBall" cx="0.35" cy="0.3" r="0.75"><stop offset="0" stop-color="#ff9a80"/><stop offset="0.5" stop-color="#e02010"/><stop offset="1" stop-color="#800000"/></radialGradient><linearGradient id="gArrow" x1="0" y1="0" x2="0" y2="1"><stop offset="0" stop-color="#2aa02a"/><stop offset="1" stop-color="#8fdc8f"/></linearGradient><linearGradient id="gArrowU" x1="0" y1="1" x2="0" y2="0"><stop offset="0" stop-color="#2aa02a"/><stop offset="1" stop-color="#8fdc8f"/></linearGradient><linearGradient id="gPic" x1="0" y1="0" x2="0" y2="1"><stop offset="0" stop-color="#dcecfa"/><stop offset="1" stop-color="#9cc4e8"/></linearGradient><linearGradient id="gScreen" x1="0" y1="0" x2="1" y2="1"><stop offset="0" stop-color="#7fd8f8"/><stop offset="1" stop-color="#1a90d0"/></linearGradient><radialGradient id="gCam" cx="0.4" cy="0.35" r="0.7"><stop offset="0" stop-color="#ffffff"/><stop offset="1" stop-color="#b8b8b8"/></radialGradient></defs>
<rect x="2" y="49" width="2" height="2" fill="#c8c8c8"/><rect x="2" y="53" width="2" height="2" fill="#c8c8c8"/><rect x="2" y="57" width="2" height="2" fill="#c8c8c8"/><rect x="2" y="61" width="2" height="2" fill="#c8c8c8"/><rect x="2" y="65" width="2" height="2" fill="#c8c8c8"/><rect x="2" y="69" width="2" height="2" fill="#c8c8c8"/>
<g shape-rendering="geometricPrecision"><path d="M14.5 49.5 H27.5 L32.5 54.5 V71.5 H14.5 Z" fill="url(#gDoc)" stroke="#6a6aaa" stroke-width="1"/><path d="M27.5 49.5 V54.5 H32.5 Z" fill="#3d8ee0"/></g>
<g shape-rendering="geometricPrecision"><path d="M42.5 54 L44 51 H50 L52 53 H60 V57 H48 L42.5 70 Z" fill="#f7c94a" stroke="#c8860a"/><path d="M42.5 70.5 L47 58.5 H65 L60.5 70.5 Z" fill="url(#gFold)" stroke="#c8860a"/></g>
<g shape-rendering="geometricPrecision"><rect x="74.5" y="49.5" width="20.5" height="21" rx="2" fill="#4a4ab8" stroke="#3030a0"/><rect x="78" y="50" width="13" height="8" fill="#ffffff"/><path d="M79.5 52.5 H89.5 M79.5 54.5 H89.5" stroke="#9a9ac8" stroke-width="0.8"/><rect x="80" y="62" width="9" height="8" fill="#e8e8f8"/><rect x="81" y="63" width="3" height="6" fill="#202070"/></g>
<rect x="102" y="45" width="1" height="29" fill="#a0a0a0"/>
<rect x="103" y="45" width="1" height="29" fill="#ffffff"/>
<g shape-rendering="geometricPrecision"><rect x="113.5" y="59.5" width="17" height="12" fill="#fff" stroke="#707070"/><rect x="115" y="61" width="14" height="9" fill="url(#gPic)"/><path d="M115 70 L119 64.5 L122 67.5 L124.5 65.5 L129 70 Z" fill="#2e4a78"/><path d="M119.5 48 H124.5 V54 H128.5 L122 61 L115.5 54 H119.5 Z" fill="url(#gArrow)" stroke="#0a7a0a" stroke-width="0.8"/></g>
<g shape-rendering="geometricPrecision"><rect x="142.5" y="48.5" width="17" height="13" fill="#fff" stroke="#707070"/><rect x="144" y="50" width="14" height="10" fill="url(#gPic)"/><path d="M144 59 L148 53.5 L151 56.5 L153.5 54.5 L158 59 Z" fill="#2e4a78"/><path d="M148.5 71.5 H153.5 V65.5 H157.5 L151 59 L144.5 65.5 H148.5 Z" fill="url(#gArrowU)" stroke="#0a7a0a" stroke-width="0.8"/></g>
<rect x="170" y="45" width="1" height="29" fill="#a0a0a0"/>
<rect x="171" y="45" width="1" height="29" fill="#ffffff"/>
<g shape-rendering="geometricPrecision"><circle cx="188" cy="60.5" r="9.6" fill="url(#gGreen)" stroke="#1c3a22" stroke-width="1"/><path d="M183 60.5 L187.5 56 M183 60.5 L187.5 65 M183.5 60.5 H193" stroke="#fff" stroke-width="2.4" fill="none" stroke-linecap="round"/></g>
<g shape-rendering="geometricPrecision"><circle cx="219" cy="60.5" r="9.6" fill="url(#gDark)" stroke="#1a1a1a" stroke-width="1"/><path d="M224 60.5 L219.5 56 M224 60.5 L219.5 65 M223.5 60.5 H214" stroke="#c8c8c8" stroke-width="2.4" fill="none" stroke-linecap="round"/></g>
<rect x="238" y="45" width="1" height="29" fill="#a0a0a0"/>
<rect x="239" y="45" width="1" height="29" fill="#ffffff"/>
<g shape-rendering="geometricPrecision"><path d="M257.5 61 L264.5 68" stroke="#a07820" stroke-width="3.6" stroke-linecap="round"/><path d="M257.5 61 L264.5 68" stroke="#e0b040" stroke-width="2.2" stroke-linecap="round"/><circle cx="253.5" cy="57" r="6.2" fill="url(#gLens)" stroke="#6a6ab0" stroke-width="1.3"/><path d="M253.5 52.5 V61.5 M249 57 H258" stroke="#3a4aa0" stroke-width="1.6"/><path d="M253.5 51.5 L252 53.5 H255 Z M253.5 62.5 L252 60.5 H255 Z M248 57 L250 55.5 V58.5 Z M259 57 L257 55.5 V58.5 Z" fill="#3a4aa0"/></g>
<g shape-rendering="geometricPrecision"><path d="M289.5 61 L296.5 68" stroke="#a07820" stroke-width="3.6" stroke-linecap="round"/><path d="M289.5 61 L296.5 68" stroke="#e0b040" stroke-width="2.2" stroke-linecap="round"/><circle cx="285.5" cy="57" r="6.2" fill="url(#gLens)" stroke="#6a6ab0" stroke-width="1.3"/><path d="M285.5 53 V61 M281.5 57 H289.5" stroke="#2a3a90" stroke-width="2.2"/></g>
<g shape-rendering="geometricPrecision"><path d="M321 61 L328 68" stroke="#a07820" stroke-width="3.6" stroke-linecap="round"/><path d="M321 61 L328 68" stroke="#e0b040" stroke-width="2.2" stroke-linecap="round"/><circle cx="317" cy="57" r="6.2" fill="url(#gLens)" stroke="#6a6ab0" stroke-width="1.3"/><path d="M313 57 H321" stroke="#2a3a90" stroke-width="2.2"/></g>
<g shape-rendering="geometricPrecision"><path d="M351 61 L358 68" stroke="#a07820" stroke-width="3.6" stroke-linecap="round"/><path d="M351 61 L358 68" stroke="#e0b040" stroke-width="2.2" stroke-linecap="round"/><circle cx="347" cy="57" r="6.2" fill="url(#gLens)" stroke="#6a6ab0" stroke-width="1.3"/><path d="M344.5 53.5 H348.5 L350 55 V60.5 H344.5 Z" fill="#e8eeff" stroke="#2a3a90" stroke-width="1"/></g>
<g shape-rendering="geometricPrecision"><path d="M382.5 61 L389.5 68" stroke="#505050" stroke-width="3.6" stroke-linecap="round"/><path d="M382.5 61 L389.5 68" stroke="#7a7a7a" stroke-width="2.2" stroke-linecap="round"/><circle cx="378.5" cy="57" r="6.2" fill="#8a8a8a" stroke="#6a6a6a" stroke-width="1.3"/><g fill="#555"><circle cx="375.5" cy="54.5" r="0.8"/><circle cx="378.5" cy="54.5" r="0.8"/><circle cx="381.5" cy="54.5" r="0.8"/><circle cx="375.5" cy="57.5" r="0.8"/><circle cx="378.5" cy="57.5" r="0.8"/><circle cx="381.5" cy="57.5" r="0.8"/><circle cx="375.5" cy="60.5" r="0.8"/><circle cx="378.5" cy="60.5" r="0.8"/><circle cx="381.5" cy="60.5" r="0.8"/></g></g>
<g shape-rendering="geometricPrecision"><path d="M413 61 L420 68" stroke="#a07820" stroke-width="3.6" stroke-linecap="round"/><path d="M413 61 L420 68" stroke="#e0b040" stroke-width="2.2" stroke-linecap="round"/><circle cx="409" cy="57" r="6.2" fill="url(#gLens)" stroke="#6a6ab0" stroke-width="1.3"/><text x="409" y="61" font-size="9" font-weight="bold" fill="#2a3a90" text-anchor="middle">A</text></g>
<g shape-rendering="geometricPrecision"><path d="M444.5 61 L451.5 68" stroke="#a07820" stroke-width="3.6" stroke-linecap="round"/><path d="M444.5 61 L451.5 68" stroke="#e0b040" stroke-width="2.2" stroke-linecap="round"/><circle cx="440.5" cy="57" r="6.2" fill="url(#gLens)" stroke="#6a6ab0" stroke-width="1.3"/></g>
<rect x="461" y="45" width="1" height="29" fill="#a0a0a0"/>
<rect x="462" y="45" width="1" height="29" fill="#ffffff"/>
<g shape-rendering="geometricPrecision"><rect x="473" y="53" width="14" height="12" fill="#c0c0c0"/><path d="M473 65 V53 H487" stroke="#0000ff" stroke-width="1.2" fill="none"/><path d="M487 53 V65 H473" stroke="#000" stroke-width="1.2" fill="none"/><circle cx="473" cy="55" r="1.2" fill="#f00"/><circle cx="485" cy="53" r="1.2" fill="#f00"/><circle cx="487" cy="63" r="1.2" fill="#f00"/><circle cx="475" cy="65" r="1.2" fill="#f00"/></g>
<g shape-rendering="geometricPrecision"><rect x="503" y="55" width="3" height="3" fill="none" stroke="#000" stroke-width="0.9"/><path d="M506 57 L510 58" stroke="#000" stroke-width="0.6"/><circle cx="513.5" cy="61.5" r="5" fill="#8a8a8a" stroke="#505050"/><circle cx="513.5" cy="61.5" r="1.5" fill="#f0f0f0" stroke="#333" stroke-width="0.7"/></g>
<g shape-rendering="geometricPrecision"><path d="M534 66 L543 55 L546 57 L537 67 Z" fill="#e0c020" stroke="#303000" stroke-width="0.9"/><path d="M543 55 L545 53 L547 55 L546 57" fill="#909090" stroke="#333" stroke-width="0.7"/><path d="M537 67 C540 66 544 64 547 62 C550 60 550 56 549 54" fill="none" stroke="#111" stroke-width="1"/></g>
<rect x="560" y="45" width="1" height="29" fill="#a0a0a0"/>
<rect x="561" y="45" width="1" height="29" fill="#ffffff"/>
<g shape-rendering="geometricPrecision"><rect x="568" y="51" width="22" height="17" fill="#000"/><rect x="570.5" y="53" width="17" height="11.5" fill="url(#gScreen)"/><path d="M576 53 L574 64.5 M579 53 L577 64.5" stroke="#c8f0ff" stroke-width="0.8" opacity="0.7"/><path d="M576 68 H582 L584 71.5 H573.5 Z" fill="#000"/></g>
<rect x="597" y="45" width="1" height="29" fill="#a0a0a0"/>
<rect x="598" y="45" width="1" height="29" fill="#ffffff"/>
<g shape-rendering="geometricPrecision"><rect x="604.2" y="50.2" width="1.8" height="1.8" fill="#000"/><rect x="609.2" y="50.2" width="1.8" height="1.8" fill="#000"/><rect x="614.2" y="50.2" width="1.8" height="1.8" fill="#000"/><rect x="625.2" y="50.2" width="1.8" height="1.8" fill="#000"/><rect x="604.2" y="61.2" width="1.8" height="1.8" fill="#000"/><rect x="614.2" y="61.2" width="1.8" height="1.8" fill="#000"/><rect x="625.2" y="61.2" width="1.8" height="1.8" fill="#000"/><rect x="604.2" y="71.2" width="1.8" height="1.8" fill="#000"/><rect x="614.2" y="71.2" width="1.8" height="1.8" fill="#000"/><rect x="625.2" y="71.2" width="1.8" height="1.8" fill="#000"/><circle cx="610.5" cy="55.5" r="4.6" fill="url(#gBall)" stroke="#20d020" stroke-width="0.9"/><rect x="615" y="61" width="10.5" height="10.5" fill="#ffff00"/><rect x="617" y="63" width="6.5" height="6.5" fill="#e84040"/><path d="M604.5 70 H607.5 M609.5 70 H612.5 M605.8 70 L608.5 63.5 L611.2 70 M606.8 67.5 H610.2 M607.5 63.5 H609.5" stroke="#ff1010" stroke-width="1.3" fill="none"/></g>
<g shape-rendering="geometricPrecision"><rect x="635.2" y="50.2" width="1.8" height="1.8" fill="#000"/><rect x="640.2" y="50.2" width="1.8" height="1.8" fill="#000"/><rect x="645.2" y="50.2" width="1.8" height="1.8" fill="#000"/><rect x="656.2" y="50.2" width="1.8" height="1.8" fill="#000"/><rect x="635.2" y="61.2" width="1.8" height="1.8" fill="#000"/><rect x="645.2" y="61.2" width="1.8" height="1.8" fill="#000"/><rect x="656.2" y="61.2" width="1.8" height="1.8" fill="#000"/><rect x="635.2" y="71.2" width="1.8" height="1.8" fill="#000"/><rect x="645.2" y="71.2" width="1.8" height="1.8" fill="#000"/><rect x="656.2" y="71.2" width="1.8" height="1.8" fill="#000"/><circle cx="641.5" cy="55.5" r="4.6" fill="url(#gBall)" stroke="#20d020" stroke-width="0.9"/><rect x="646" y="61" width="10.5" height="10.5" fill="#ffff00"/><rect x="648" y="63" width="6.5" height="6.5" fill="#e84040"/></g>
<g shape-rendering="geometricPrecision"><rect x="666.2" y="50.2" width="1.8" height="1.8" fill="#000"/><rect x="671.2" y="50.2" width="1.8" height="1.8" fill="#000"/><rect x="676.2" y="50.2" width="1.8" height="1.8" fill="#000"/><rect x="666.2" y="55.2" width="1.8" height="1.8" fill="#000"/><rect x="676.2" y="55.2" width="1.8" height="1.8" fill="#000"/><rect x="666.2" y="61.2" width="1.8" height="1.8" fill="#000"/><rect x="671.2" y="61.2" width="1.8" height="1.8" fill="#000"/><rect x="676.2" y="61.2" width="1.8" height="1.8" fill="#000"/><rect x="673.2" y="58.2" width="1.8" height="1.8" fill="#000"/><rect x="679.2" y="58.2" width="1.8" height="1.8" fill="#000"/><rect x="687.2" y="58.2" width="1.8" height="1.8" fill="#000"/><rect x="673.2" y="64.2" width="1.8" height="1.8" fill="#000"/><rect x="687.2" y="64.2" width="1.8" height="1.8" fill="#000"/><rect x="673.2" y="71.2" width="1.8" height="1.8" fill="#000"/><rect x="679.2" y="71.2" width="1.8" height="1.8" fill="#000"/><rect x="687.2" y="71.2" width="1.8" height="1.8" fill="#000"/><circle cx="672.5" cy="55.5" r="4.6" fill="url(#gBall)" stroke="#20d020" stroke-width="0.9"/><rect x="677" y="61" width="10.5" height="10.5" fill="#ffff00"/><rect x="679" y="63" width="6.5" height="6.5" fill="#e84040"/></g>
<rect x="2" y="82" width="2" height="2" fill="#c8c8c8"/><rect x="2" y="86" width="2" height="2" fill="#c8c8c8"/><rect x="2" y="90" width="2" height="2" fill="#c8c8c8"/><rect x="2" y="94" width="2" height="2" fill="#c8c8c8"/><rect x="2" y="98" width="2" height="2" fill="#c8c8c8"/><rect x="2" y="102" width="2" height="2" fill="#c8c8c8"/>
<g shape-rendering="geometricPrecision"><rect x="10" y="87" width="24" height="12" rx="2" fill="#000"/><rect x="12" y="98" width="4" height="3" fill="#000"/><rect x="28" y="98" width="4" height="3" fill="#000"/><rect x="14" y="90" width="1.6" height="6" fill="#ddd"/><rect x="17" y="90" width="1.6" height="6" fill="#ddd"/><circle cx="28.5" cy="93" r="2.8" fill="none" stroke="#fff" stroke-width="1.6"/></g>
<rect x="41" y="88" width="1" height="12" fill="#e0e0e0"/>
<g shape-rendering="geometricPrecision"><path d="M43.5 102.5 L58 86" stroke="#111" stroke-width="1.6"/><path d="M58.5 85.5 L52 87.5 L56.5 92 Z" fill="#111"/><path d="M59.5 81.5 V88 M56.5 84.5 H62.5" stroke="#111" stroke-width="1"/></g>
<g shape-rendering="geometricPrecision"><rect x="79.5" y="82.5" width="9" height="21" fill="#fff" stroke="#000"/><path d="M80 85.5 H83 M80 88.5 H85 M80 91.5 H83 M80 94.5 H85 M80 97.5 H83 M80 100.5 H85" stroke="#0000ff" stroke-width="0.9"/></g>
<text x="117" y="101" font-size="19.5" fill="#108080" text-anchor="middle" font-weight="bold" textLength="17" lengthAdjust="spacingAndGlyphs" >M</text>
<rect x="131" y="79" width="1" height="29" fill="#a0a0a0"/>
<rect x="132" y="79" width="1" height="29" fill="#ffffff"/>
<rect x="135" y="82" width="2" height="2" fill="#c8c8c8"/><rect x="135" y="86" width="2" height="2" fill="#c8c8c8"/><rect x="135" y="90" width="2" height="2" fill="#c8c8c8"/><rect x="135" y="94" width="2" height="2" fill="#c8c8c8"/><rect x="135" y="98" width="2" height="2" fill="#c8c8c8"/><rect x="135" y="102" width="2" height="2" fill="#c8c8c8"/>
<g shape-rendering="geometricPrecision"><path d="M147.5 100 C149 95 151 92 153.5 94.5 C156 97 158 96 160 93.5 C161.5 91.5 162.5 89.5 162.5 87" fill="none" stroke="#000" stroke-width="1.2"/></g>
<text x="186" y="97" font-size="9" fill="#222" text-anchor="middle" font-family="Liberation Serif" textLength="17" lengthAdjust="spacingAndGlyphs" >BMP</text>
<rect x="210.5" y="86.5" width="14" height="13" fill="none" stroke="#000" stroke-width="1.2"/>
<g shape-rendering="geometricPrecision"><path d="M248.5 90 L254 98 H243" fill="none" stroke="#0000ff" stroke-width="1"/><rect x="247" y="86.5" width="3.5" height="3.5" fill="#00d000" stroke="#000" stroke-width="0.8"/><rect x="241.5" y="96.5" width="3.5" height="3.5" fill="#00d000" stroke="#000" stroke-width="0.8"/><rect x="252.5" y="96.5" width="3.5" height="3.5" fill="#00d000" stroke="#000" stroke-width="0.8"/></g>
<g shape-rendering="geometricPrecision"><path d="M273.5 85 V99 M285.5 85 V99" stroke="#000" stroke-width="1"/><rect x="272" y="89" width="3" height="3" fill="#fff" stroke="#000" stroke-width="0.8"/><rect x="272" y="95" width="3" height="3" fill="#fff" stroke="#000" stroke-width="0.8"/><path d="M276 92 H281 V90 L285 93.5 L281 97 V95 H276 Z" fill="#555" stroke="#000" stroke-width="0.6"/></g>
<g shape-rendering="geometricPrecision"><path d="M304.5 85 V99 M316.5 85 V99" stroke="#000" stroke-width="1"/><path d="M305 86 L307 88 M307 86 L305 88" stroke="#000" stroke-width="0.6"/><path d="M307 92 H312 V90 L316 93.5 L312 97 V95 H307 Z" fill="#555" stroke="#000" stroke-width="0.6"/></g>
<g shape-rendering="geometricPrecision" fill="none" stroke="#000" stroke-width="1.1"><path d="M335.5 99.5 H348.5 C350.5 99.5 351.5 98 351.5 96 V93.5 C351.5 91.5 350 90 348 90 H346.5 C346.5 87 345 85.5 342 85.5 C339 85.5 337.5 87 337.5 90 H336 C334 90 332.5 91.5 332.5 93.5 V96 C332.5 98 333.5 99.5 335.5 99.5 Z"/><path d="M336.5 97.5 H347.5 C349 97.5 349.5 96.5 349.5 95.5 V94 C349.5 92.8 348.8 92 347.5 92 H345 V90.5 C345 88.5 344 87.5 342 87.5 C340 87.5 339 88.5 339 90.5 V92 H336.5 C335.2 92 334.5 92.8 334.5 94 V95.5 C334.5 96.5 335 97.5 336.5 97.5 Z" stroke-width="0.8"/></g><rect x="331" y="92.5" width="2" height="4" fill="#000"/><rect x="351" y="92.5" width="2" height="4" fill="#000"/>
<g shape-rendering="geometricPrecision"><rect x="364.5" y="85.5" width="15" height="15" fill="#fff" stroke="#000"/><circle cx="367.5" cy="89" r="1.4" fill="#600"/><circle cx="367.5" cy="93" r="1.4" fill="#006"/><circle cx="367.5" cy="97" r="1.4" fill="#060"/><path d="M366 89 L368 90.5 L372 87" stroke="#f00" fill="none"/><path d="M366 93 L368 94.5 L372 91" stroke="#00f" fill="none"/><path d="M366 97 L368 98.5 L372 95" stroke="#0a0" fill="none"/><path d="M370 89 H378 M370 93 H378 M370 97 H378" stroke="#d0d0d0" stroke-width="0.6"/></g>
<rect x="388" y="79" width="1" height="29" fill="#a0a0a0"/>
<rect x="389" y="79" width="1" height="29" fill="#ffffff"/>
<rect x="397.5" y="86.5" width="11" height="11" fill="#fff" stroke="#a0a0a0"/>
<rect x="398" y="87" width="10" height="1" fill="#696969"/>
<rect x="398" y="87" width="1" height="10" fill="#696969"/>
<rect x="420" y="79" width="31" height="29" fill="#c6c6c6" />
<rect x="420" y="79" width="31" height="1" fill="#e8e8e8"/>
<rect x="420" y="79" width="1" height="29" fill="#e8e8e8"/>
<rect x="420" y="106" width="31" height="2" fill="#8a8a8a"/>
<rect x="449" y="79" width="2" height="29" fill="#8a8a8a"/>
<rect x="452" y="79" width="31" height="29" fill="#c6c6c6" />
<rect x="452" y="79" width="31" height="1" fill="#e8e8e8"/>
<rect x="452" y="79" width="1" height="29" fill="#e8e8e8"/>
<rect x="452" y="106" width="31" height="2" fill="#8a8a8a"/>
<rect x="481" y="79" width="2" height="29" fill="#8a8a8a"/>
<rect x="485" y="79" width="31" height="29" fill="#c6c6c6" />
<rect x="485" y="79" width="31" height="1" fill="#e8e8e8"/>
<rect x="485" y="79" width="1" height="29" fill="#e8e8e8"/>
<rect x="485" y="106" width="31" height="2" fill="#8a8a8a"/>
<rect x="514" y="79" width="2" height="29" fill="#8a8a8a"/>
<rect x="518" y="79" width="31" height="29" fill="#c6c6c6" />
<rect x="518" y="79" width="31" height="1" fill="#e8e8e8"/>
<rect x="518" y="79" width="1" height="29" fill="#e8e8e8"/>
<rect x="518" y="106" width="31" height="2" fill="#8a8a8a"/>
<rect x="547" y="79" width="2" height="29" fill="#8a8a8a"/>
<rect x="551" y="79" width="31" height="29" fill="#c6c6c6" />
<rect x="551" y="79" width="31" height="1" fill="#e8e8e8"/>
<rect x="551" y="79" width="1" height="29" fill="#e8e8e8"/>
<rect x="551" y="106" width="31" height="2" fill="#8a8a8a"/>
<rect x="580" y="79" width="2" height="29" fill="#8a8a8a"/>
<rect x="584" y="79" width="31" height="29" fill="#c6c6c6" />
<rect x="584" y="79" width="31" height="1" fill="#e8e8e8"/>
<rect x="584" y="79" width="1" height="29" fill="#e8e8e8"/>
<rect x="584" y="106" width="31" height="2" fill="#8a8a8a"/>
<rect x="613" y="79" width="2" height="29" fill="#8a8a8a"/>
<g shape-rendering="geometricPrecision"><ellipse cx="434" cy="101.5" rx="7" ry="3.5" fill="#e0e0e0" stroke="#c0c0c0" stroke-width="0.8"/><circle cx="434" cy="90.5" r="10" fill="url(#gCam)" stroke="#c4c4c4" stroke-width="0.8"/><circle cx="427" cy="89" r="4.3" fill="#5a5a5a" stroke="#999" stroke-width="0.8"/><circle cx="426" cy="87.8" r="1.5" fill="#b8b8b8"/></g>
<g shape-rendering="geometricPrecision"><rect x="457" y="82" width="18" height="17.5" fill="none" stroke="#808080" stroke-width="2.4" stroke-dasharray="3 1.6"/><path d="M478 97 V105 M474 101 H482" stroke="#808080" stroke-width="2"/></g>
<g shape-rendering="geometricPrecision"><path d="M489.5 92.5 L494 97.5 L504 86 M495.5 92.5 L500 97.5 L510 86" fill="none" stroke="#f8f8f8" stroke-width="4.6" stroke-linejoin="round"/><path d="M489.5 92.5 L494 97.5 L504 86 M495.5 92.5 L500 97.5 L510 86" fill="none" stroke="#a8a8a8" stroke-width="2" stroke-linejoin="round"/></g>
<g shape-rendering="geometricPrecision"><path d="M526 99.5 L532 85 L542.5 89 L536.5 103.5 Z" fill="none" stroke="#000" stroke-width="1.1"/><path d="M521 102.5 H543" stroke="#333" stroke-width="1"/></g>
<g shape-rendering="geometricPrecision"><ellipse cx="565" cy="93" rx="11" ry="6.5" fill="none" stroke="#000" stroke-width="1.1"/><circle cx="565.5" cy="93" r="4.5" fill="none" stroke="#000" stroke-width="1"/><path d="M557.5 103 L574 80" stroke="#111" stroke-width="0.8"/></g>
<g shape-rendering="geometricPrecision" transform="translate(598.5 92.5)"><path d="M-1.8 -9 H1.8 L2.4 -6.3 L4.8 -5.2 L7.2 -6.8 L9.2 -4.8 L7.6 -2.4 L8.6 0 L11 0.6 V3.4 L8.3 3.9 L7.2 6.3 L8.8 8.6 L6.2 10.6 L3.9 9 L1.6 9.9 L1 12.5 H-2 L-2.6 9.9 L-4.9 9 L-7.2 10.6 L-9.2 8.6 L-7.6 6.3 L-8.6 3.9 L-11 3.4 V0.6 L-8.6 0 L-7.6 -2.4 L-9.2 -4.8 L-7.2 -6.8 L-4.8 -5.2 L-2.4 -6.3 Z" transform="translate(0 -1.7) scale(0.9)" fill="#8a8a8a" stroke="#5a5a5a" stroke-width="0.8"/><circle cx="0" cy="0" r="3.6" fill="#c6c6c6" stroke="#444" stroke-width="1.4"/></g>
<rect x="620" y="79" width="1" height="29" fill="#a0a0a0"/>
<rect x="621" y="79" width="1" height="29" fill="#ffffff"/>
<text x="2" y="126" font-size="11.5" fill="#000" >X</text>
<text x="2" y="142" font-size="11.5" fill="#000" >Y</text>
<rect x="13" y="112" width="46" height="15" fill="#f0f0f0" />
<rect x="13" y="112" width="46" height="1" fill="#a0a0a0"/>
<rect x="13" y="112" width="1" height="15" fill="#a0a0a0"/>
<rect x="14" y="113" width="44" height="1" fill="#696969"/>
<rect x="14" y="113" width="1" height="13" fill="#696969"/>
<rect x="13" y="126" width="46" height="1" fill="#ffffff"/>
<rect x="58" y="112" width="1" height="15" fill="#ffffff"/>
<rect x="14" y="125" width="44" height="1" fill="#e3e3e3"/>
<rect x="57" y="113" width="1" height="13" fill="#e3e3e3"/>
<rect x="13" y="128" width="46" height="15" fill="#f0f0f0" />
<rect x="13" y="128" width="46" height="1" fill="#a0a0a0"/>
<rect x="13" y="128" width="1" height="15" fill="#a0a0a0"/>
<rect x="14" y="129" width="44" height="1" fill="#696969"/>
<rect x="14" y="129" width="1" height="13" fill="#696969"/>
<rect x="13" y="142" width="46" height="1" fill="#ffffff"/>
<rect x="58" y="128" width="1" height="15" fill="#ffffff"/>
<rect x="14" y="141" width="44" height="1" fill="#e3e3e3"/>
<rect x="57" y="129" width="1" height="13" fill="#e3e3e3"/>
<text x="18" y="124.5" font-size="11.5" fill="#6d6d6d" textLength="39" lengthAdjust="spacingAndGlyphs" >352.563</text>
<text x="18" y="140.5" font-size="11.5" fill="#6d6d6d" textLength="39" lengthAdjust="spacingAndGlyphs" >275.774</text>
<text x="61" y="124" font-size="11" fill="#000" textLength="15" lengthAdjust="spacingAndGlyphs" >mm</text>
<text x="61" y="140" font-size="11" fill="#000" textLength="15" lengthAdjust="spacingAndGlyphs" >mm</text>
<rect x="84" y="113" width="17" height="16" fill="#f0f0f0" />
<rect x="84" y="129" width="17" height="15" fill="#c0c0c0" />
<rect x="84" y="113" width="17" height="1" fill="#c8c8c8"/>
<g shape-rendering="geometricPrecision"><path d="M86.5 121 H98.5" stroke="#000" stroke-width="1.6"/><path d="M85.5 121 L89.5 118 V124 Z M99.5 121 L95.5 118 V124 Z" fill="#000"/><path d="M92.5 131.5 V142.5" stroke="#000" stroke-width="1.6"/><path d="M92.5 130.5 L89.5 134.5 H95.5 Z M92.5 143.5 L89.5 139.5 H95.5 Z" fill="#000"/></g>
<rect x="103" y="112" width="46" height="15" fill="#f0f0f0" />
<rect x="103" y="112" width="46" height="1" fill="#a0a0a0"/>
<rect x="103" y="112" width="1" height="15" fill="#a0a0a0"/>
<rect x="104" y="113" width="44" height="1" fill="#696969"/>
<rect x="104" y="113" width="1" height="13" fill="#696969"/>
<rect x="103" y="126" width="46" height="1" fill="#ffffff"/>
<rect x="148" y="112" width="1" height="15" fill="#ffffff"/>
<rect x="104" y="125" width="44" height="1" fill="#e3e3e3"/>
<rect x="147" y="113" width="1" height="13" fill="#e3e3e3"/>
<rect x="103" y="128" width="46" height="15" fill="#f0f0f0" />
<rect x="103" y="128" width="46" height="1" fill="#a0a0a0"/>
<rect x="103" y="128" width="1" height="15" fill="#a0a0a0"/>
<rect x="104" y="129" width="44" height="1" fill="#696969"/>
<rect x="104" y="129" width="1" height="13" fill="#696969"/>
<rect x="103" y="142" width="46" height="1" fill="#ffffff"/>
<rect x="148" y="128" width="1" height="15" fill="#ffffff"/>
<rect x="104" y="141" width="44" height="1" fill="#e3e3e3"/>
<rect x="147" y="129" width="1" height="13" fill="#e3e3e3"/>
<text x="109" y="124.5" font-size="11.5" fill="#6d6d6d" textLength="27" lengthAdjust="spacingAndGlyphs" >139.7</text>
<text x="109" y="140.5" font-size="11.5" fill="#6d6d6d" textLength="27" lengthAdjust="spacingAndGlyphs" >215.9</text>
<text x="151" y="124" font-size="11" fill="#000" textLength="15" lengthAdjust="spacingAndGlyphs" >mm</text>
<text x="151" y="140" font-size="11" fill="#000" textLength="15" lengthAdjust="spacingAndGlyphs" >mm</text>
<rect x="177" y="112" width="1" height="31" fill="#a0a0a0"/>
<rect x="178" y="112" width="1" height="31" fill="#ffffff"/>
<rect x="180" y="112" width="31" height="15" fill="#f0f0f0" />
<rect x="180" y="112" width="31" height="1" fill="#a0a0a0"/>
<rect x="180" y="112" width="1" height="15" fill="#a0a0a0"/>
<rect x="181" y="113" width="29" height="1" fill="#696969"/>
<rect x="181" y="113" width="1" height="13" fill="#696969"/>
<rect x="180" y="126" width="31" height="1" fill="#ffffff"/>
<rect x="210" y="112" width="1" height="15" fill="#ffffff"/>
<rect x="181" y="125" width="29" height="1" fill="#e3e3e3"/>
<rect x="209" y="113" width="1" height="13" fill="#e3e3e3"/>
<rect x="180" y="128" width="31" height="15" fill="#f0f0f0" />
<rect x="180" y="128" width="31" height="1" fill="#a0a0a0"/>
<rect x="180" y="128" width="1" height="15" fill="#a0a0a0"/>
<rect x="181" y="129" width="29" height="1" fill="#696969"/>
<rect x="181" y="129" width="1" height="13" fill="#696969"/>
<rect x="180" y="142" width="31" height="1" fill="#ffffff"/>
<rect x="210" y="128" width="1" height="15" fill="#ffffff"/>
<rect x="181" y="141" width="29" height="1" fill="#e3e3e3"/>
<rect x="209" y="129" width="1" height="13" fill="#e3e3e3"/>
<text x="186" y="124.5" font-size="11.5" fill="#6d6d6d" textLength="19" lengthAdjust="spacingAndGlyphs" >100</text>
<text x="186" y="140.5" font-size="11.5" fill="#6d6d6d" textLength="19" lengthAdjust="spacingAndGlyphs" >100</text>
<text x="216" y="125" font-size="12" fill="#000" >%</text>
<text x="216" y="141" font-size="12" fill="#000" >%</text>
<rect x="234" y="115" width="24" height="26" fill="#f0f0f0" />
<rect x="234" y="115" width="24" height="1" fill="#ffffff"/>
<rect x="234" y="115" width="1" height="26" fill="#ffffff"/>
<rect x="234" y="140" width="24" height="1" fill="#696969"/>
<rect x="257" y="115" width="1" height="26" fill="#696969"/>
<rect x="235" y="139" width="22" height="1" fill="#a0a0a0"/>
<rect x="256" y="116" width="1" height="24" fill="#a0a0a0"/>
<g shape-rendering="geometricPrecision"><rect x="239" y="127" width="14" height="11" rx="2" fill="#000"/><rect x="241" y="129" width="10" height="7" rx="1" fill="none" stroke="#888" stroke-width="0.8"/><path d="M241 127 V121.5 C241 119.5 242.5 118.5 245 118.5 C247.5 118.5 249 119.5 249 121.5 V123" fill="none" stroke="#000" stroke-width="1.8"/></g>
<rect x="259" y="115" width="24" height="26" fill="#f0f0f0" />
<rect x="259" y="115" width="24" height="1" fill="#ffffff"/>
<rect x="259" y="115" width="1" height="26" fill="#ffffff"/>
<rect x="259" y="140" width="24" height="1" fill="#696969"/>
<rect x="282" y="115" width="1" height="26" fill="#696969"/>
<rect x="260" y="139" width="22" height="1" fill="#a0a0a0"/>
<rect x="281" y="116" width="1" height="24" fill="#a0a0a0"/>
<g fill="none" stroke="#000" stroke-width="1"><rect x="262.5" y="118.5" width="17" height="18"/><path d="M268.5 118.5 V136.5 M274.5 118.5 V136.5 M262.5 124.5 H279.5 M262.5 130.5 H279.5"/></g>
<rect x="269" y="125" width="5" height="5" fill="#000" />
<rect x="289" y="115" width="24" height="26" fill="#f0f0f0" />
<rect x="289" y="115" width="24" height="1" fill="#ffffff"/>
<rect x="289" y="115" width="1" height="26" fill="#ffffff"/>
<rect x="289" y="140" width="24" height="1" fill="#696969"/>
<rect x="312" y="115" width="1" height="26" fill="#696969"/>
<rect x="290" y="139" width="22" height="1" fill="#a0a0a0"/>
<rect x="311" y="116" width="1" height="24" fill="#a0a0a0"/>
<g shape-rendering="geometricPrecision"><rect x="292.5" y="118.5" width="17" height="18" fill="none" stroke="#000" stroke-dasharray="1.5 1.5"/><rect x="291.5" y="127.5" width="10" height="10" fill="#fff" stroke="#000"/><path d="M296.5 125 V120 M294.5 122 L296.5 119.5 L298.5 122 M303 132.5 H308 M306 130.5 L308.5 132.5 L306 134.5" fill="none" stroke="#000"/></g>
<rect x="322" y="112" width="1" height="31" fill="#a0a0a0"/>
<rect x="323" y="112" width="1" height="31" fill="#ffffff"/>
<g shape-rendering="geometricPrecision"><path d="M350 124 A7.5 7.5 0 1 0 351.5 131" fill="none" stroke="#000" stroke-width="1.3"/><path d="M347.5 127 H354 L350.7 132 Z" fill="#000"/></g>
<rect x="360" y="118" width="37" height="19" fill="#f0f0f0" />
<rect x="360" y="118" width="37" height="1" fill="#a0a0a0"/>
<rect x="360" y="118" width="1" height="19" fill="#a0a0a0"/>
<rect x="361" y="119" width="35" height="1" fill="#696969"/>
<rect x="361" y="119" width="1" height="17" fill="#696969"/>
<rect x="360" y="136" width="37" height="1" fill="#ffffff"/>
<rect x="396" y="118" width="1" height="19" fill="#ffffff"/>
<rect x="361" y="135" width="35" height="1" fill="#e3e3e3"/>
<rect x="395" y="119" width="1" height="17" fill="#e3e3e3"/>
<text x="365" y="132" font-size="12" fill="#8a8a8a" >0</text>
<text x="398" y="125" font-size="9" fill="#000" font-weight="bold" >o</text>
<text x="410" y="133" font-size="11.5" fill="#a0a0a0" textLength="58" lengthAdjust="spacingAndGlyphs" >Process NO:</text>
<rect x="471" y="118" width="41" height="19" fill="#f0f0f0" />
<rect x="471" y="118" width="41" height="1" fill="#a0a0a0"/>
<rect x="471" y="118" width="1" height="19" fill="#a0a0a0"/>
<rect x="472" y="119" width="39" height="1" fill="#696969"/>
<rect x="472" y="119" width="1" height="17" fill="#696969"/>
<rect x="471" y="136" width="41" height="1" fill="#ffffff"/>
<rect x="511" y="118" width="1" height="19" fill="#ffffff"/>
<rect x="472" y="135" width="39" height="1" fill="#e3e3e3"/>
<rect x="510" y="119" width="1" height="17" fill="#e3e3e3"/>
<text x="476" y="132" font-size="12" fill="#8a8a8a" >3</text>
<rect x="525" y="116" width="2" height="2" fill="#c8c8c8"/><rect x="525" y="120" width="2" height="2" fill="#c8c8c8"/><rect x="525" y="124" width="2" height="2" fill="#c8c8c8"/><rect x="525" y="128" width="2" height="2" fill="#c8c8c8"/><rect x="525" y="132" width="2" height="2" fill="#c8c8c8"/><rect x="525" y="136" width="2" height="2" fill="#c8c8c8"/>
<g shape-rendering="geometricPrecision" fill="none" stroke="#000" stroke-width="1"><path d="M538.5 119 V135"/><rect x="539.5" y="120.5" width="8" height="5"/><path d="M539 130.5 L545 127.5 L551.5 130.5 L545 133.5 Z"/><path d="M582.5 119 V135"/><rect x="573.5" y="120.5" width="8" height="5"/><path d="M582 130.5 L576 127.5 L569 130.5 L576 133.5 Z"/><path d="M599 120.5 H615"/><rect x="600.5" y="121.5" width="5" height="9"/><path d="M610.5 121 L613.5 127.5 L610.5 134.5 L607.5 127.5 Z"/><path d="M630 133.5 H646"/><rect x="631.5" y="124.5" width="5" height="9"/><path d="M641.5 120 L644.5 126.5 L641.5 133 L638.5 126.5 Z"/><path d="M661 127.5 H677"/><rect x="662.5" y="123.5" width="5" height="8"/><path d="M672.5 120 L675.5 127.5 L672.5 135 L669.5 127.5 Z"/><path d="M699.5 119 V135"/><rect x="695.5" y="120.5" width="8" height="5"/><path d="M693 130.5 L699.5 127.5 L706 130.5 L699.5 133.5 Z"/></g>
<rect x="718" y="113" width="1" height="29" fill="#a0a0a0"/>
<rect x="719" y="113" width="1" height="29" fill="#ffffff"/>
<g shape-rendering="geometricPrecision" fill="none" stroke="#000" stroke-width="1"><path d="M729 122 H731.5 V133 H729 M744 122 H741.5 V133 H744 M731.5 127.5 H741.5"/><path d="M733.5 127.5 L735.5 125.5 V129.5 Z M739.5 127.5 L737.5 125.5 V129.5 Z" fill="#000"/><path d="M763.5 119.5 V122 H773.5 V119.5 M763.5 135.5 V133 H773.5 V135.5 M768.5 122 V133"/><path d="M768.5 124 L766.5 126 H770.5 Z M768.5 131 L766.5 129 H770.5 Z" fill="#000"/><rect x="791.5" y="123.5" width="15" height="8" stroke-width="1.4"/><path d="M793.5 127.5 H804.5"/><rect x="825.5" y="120.5" width="9" height="13" stroke-width="1.4"/><path d="M830 122.5 V131.5"/><rect x="854.5" y="120.5" width="14" height="14" stroke-width="1.4"/><path d="M861.5 120.5 V134.5 M854.5 127.5 H868.5"/></g>
<rect x="879" y="113" width="1" height="29" fill="#a0a0a0"/>
<rect x="880" y="113" width="1" height="29" fill="#ffffff"/>
<g shape-rendering="geometricPrecision" fill="none" stroke="#000" stroke-width="1"><path d="M891 134.5 V120.5 H905"/><path d="M893.5 123 L899 128.5 M893.5 123 H897 M893.5 123 V126.5"/><rect x="889.5" y="119.5" width="2.5" height="2.5" fill="#000"/><path d="M936 134.5 V120.5 H922"/><path d="M933.5 123 L927.5 129 M933.5 123 H930 M933.5 123 V126.5"/><rect x="935" y="119.5" width="2.5" height="2.5" fill="#000"/><path d="M967 119.5 V134 H953"/><path d="M964.5 131.5 L958.5 125.5 M964.5 131.5 H961 M964.5 131.5 V128"/><rect x="966" y="133" width="2.5" height="2.5" fill="#000"/><path d="M983.5 119.5 V134 H998"/><path d="M986 131.5 L992 125.5 M986 131.5 H989.5 M986 131.5 V128"/><rect x="982.5" y="133" width="2.5" height="2.5" fill="#000"/><rect x="1015.5" y="120.5" width="14" height="14" stroke-width="1.2"/><path d="M1022.5 118.5 V136.5 M1013.5 127.5 H1031.5" stroke="#888"/><path d="M1022.5 127.5 L1027 123"/><circle cx="1022.5" cy="127.5" r="1.3" fill="#000"/></g>
<rect x="1040" y="113" width="1" height="29" fill="#a0a0a0"/>
<rect x="1041" y="113" width="1" height="29" fill="#ffffff"/>
<g shape-rendering="geometricPrecision" fill="none" stroke="#000" stroke-width="1"><path d="M1051.5 120 V135 M1052 127.5 H1068"/><path d="M1052.5 127.5 L1056 124.5 M1052.5 127.5 L1056 130.5"/><path d="M1098.5 120 V135 M1081 127.5 H1098"/><path d="M1097.5 127.5 L1094 124.5 M1097.5 127.5 L1094 130.5"/><path d="M1115 118.5 H1131 M1123 119 V136"/><path d="M1123 119.5 L1120 123 M1123 119.5 L1126 123"/><path d="M1145 135.5 H1162 M1153 118 V135"/><path d="M1153 134.5 L1150 131 M1153 134.5 L1156 131"/></g>
<rect x="1168" y="113" width="1" height="29" fill="#a0a0a0"/>
<rect x="1169" y="113" width="1" height="29" fill="#ffffff"/>
<rect x="1171" y="118" width="72" height="19" fill="#f0f0f0" />
<rect x="1171" y="118" width="72" height="1" fill="#a0a0a0"/>
<rect x="1171" y="118" width="1" height="19" fill="#a0a0a0"/>
<rect x="1172" y="119" width="70" height="1" fill="#696969"/>
<rect x="1172" y="119" width="1" height="17" fill="#696969"/>
<rect x="1171" y="136" width="72" height="1" fill="#ffffff"/>
<rect x="1242" y="118" width="1" height="19" fill="#ffffff"/>
<rect x="1172" y="135" width="70" height="1" fill="#e3e3e3"/>
<rect x="1241" y="119" width="1" height="17" fill="#e3e3e3"/>
<rect x="1173" y="120" width="68" height="15" fill="#f0f0f0" />
<text x="1175" y="132.5" font-size="12" fill="#8a8a8a" textLength="30" lengthAdjust="spacingAndGlyphs" >In cut</text>
<rect x="1226" y="120" width="16" height="15" fill="#f0f0f0" />
<rect x="1226" y="120" width="16" height="1" fill="#ffffff"/>
<rect x="1226" y="120" width="1" height="15" fill="#ffffff"/>
<rect x="1226" y="134" width="16" height="1" fill="#696969"/>
<rect x="1241" y="120" width="1" height="15" fill="#696969"/>
<rect x="1227" y="133" width="14" height="1" fill="#a0a0a0"/>
<rect x="1240" y="121" width="1" height="13" fill="#a0a0a0"/>
<path d="M1230 126 H1238 L1234 130 Z" fill="#a0a0a0"/>
<rect x="1248" y="117" width="59" height="23" fill="#f0f0f0" />
<rect x="1248" y="117" width="59" height="1" fill="#ffffff"/>
<rect x="1248" y="117" width="1" height="23" fill="#ffffff"/>
<rect x="1248" y="139" width="59" height="1" fill="#696969"/>
<rect x="1306" y="117" width="1" height="23" fill="#696969"/>
<rect x="1249" y="138" width="57" height="1" fill="#a0a0a0"/>
<rect x="1305" y="118" width="1" height="21" fill="#a0a0a0"/>
<text x="1277.5" y="133" font-size="12" fill="#a0a0a0" text-anchor="middle" textLength="25" lengthAdjust="spacingAndGlyphs" >Auto</text>
<rect x="1308" y="117" width="59" height="23" fill="#f0f0f0" />
<rect x="1308" y="117" width="59" height="1" fill="#ffffff"/>
<rect x="1308" y="117" width="1" height="23" fill="#ffffff"/>
<rect x="1308" y="139" width="59" height="1" fill="#696969"/>
<rect x="1366" y="117" width="1" height="23" fill="#696969"/>
<rect x="1309" y="138" width="57" height="1" fill="#a0a0a0"/>
<rect x="1365" y="118" width="1" height="21" fill="#a0a0a0"/>
<text x="1337.5" y="133" font-size="12" fill="#a0a0a0" text-anchor="middle" textLength="52" lengthAdjust="spacingAndGlyphs" >Cut In/Out</text>
<rect x="1368" y="117" width="59" height="23" fill="#f0f0f0" />
<rect x="1368" y="117" width="59" height="1" fill="#ffffff"/>
<rect x="1368" y="117" width="1" height="23" fill="#ffffff"/>
<rect x="1368" y="139" width="59" height="1" fill="#696969"/>
<rect x="1426" y="117" width="1" height="23" fill="#696969"/>
<rect x="1369" y="138" width="57" height="1" fill="#a0a0a0"/>
<rect x="1425" y="118" width="1" height="21" fill="#a0a0a0"/>
<text x="1397.5" y="133" font-size="12" fill="#000" text-anchor="middle" textLength="29" lengthAdjust="spacingAndGlyphs" >Check</text>
<rect x="1428" y="117" width="59" height="23" fill="#f0f0f0" />
<rect x="1428" y="117" width="59" height="1" fill="#ffffff"/>
<rect x="1428" y="117" width="1" height="23" fill="#ffffff"/>
<rect x="1428" y="139" width="59" height="1" fill="#696969"/>
<rect x="1486" y="117" width="1" height="23" fill="#696969"/>
<rect x="1429" y="138" width="57" height="1" fill="#a0a0a0"/>
<rect x="1485" y="118" width="1" height="21" fill="#a0a0a0"/>
<text x="1457.5" y="133" font-size="12" fill="#000" text-anchor="middle" textLength="24" lengthAdjust="spacingAndGlyphs" >Draw</text>
<rect x="1490" y="112" width="1" height="31" fill="#ffffff"/>
<rect x="1491" y="112" width="1" height="31" fill="#a0a0a0"/>
<rect x="1624" y="146" width="296" height="838" fill="#f0f0f0" />
<rect x="1623" y="146" width="1" height="840" fill="#ffffff"/>
<rect x="1629" y="146" width="1" height="450" fill="#ffffff"/>
<rect x="1628" y="152" width="274" height="1" fill="#a0a0a0"/>
<rect x="1628" y="153" width="274" height="1" fill="#ffffff"/>
<rect x="1628" y="155" width="274" height="1" fill="#a0a0a0"/>
<rect x="1628" y="156" width="274" height="1" fill="#ffffff"/>
<rect x="1901" y="151" width="1" height="5" fill="#a0a0a0"/>
<path d="M1907.5 150.5 L1913.5 156.5 M1913.5 150.5 L1907.5 156.5" stroke="#000" stroke-width="1.8" shape-rendering="geometricPrecision"/>
<rect x="1630" y="181" width="287" height="1" fill="#ffffff"/>
<rect x="1675" y="164" width="44" height="18" fill="#f0f0f0" />
<rect x="1676" y="164" width="42" height="1" fill="#ffffff"/>
<rect x="1675" y="165" width="1" height="17" fill="#ffffff"/>
<rect x="1718" y="165" width="1" height="17" fill="#696969"/>
<rect x="1717" y="165" width="1" height="17" fill="#a0a0a0"/>
<text x="1679" y="177" font-size="11.5" fill="#000" textLength="34.5" lengthAdjust="spacingAndGlyphs" >Output</text>
<rect x="1719" y="164" width="42" height="18" fill="#f0f0f0" />
<rect x="1720" y="164" width="40" height="1" fill="#ffffff"/>
<rect x="1719" y="165" width="1" height="17" fill="#ffffff"/>
<rect x="1760" y="165" width="1" height="17" fill="#696969"/>
<rect x="1759" y="165" width="1" height="17" fill="#a0a0a0"/>
<text x="1723" y="177" font-size="11.5" fill="#000" textLength="19" lengthAdjust="spacingAndGlyphs" >Doc</text>
<rect x="1761" y="164" width="43" height="18" fill="#f0f0f0" />
<rect x="1762" y="164" width="41" height="1" fill="#ffffff"/>
<rect x="1761" y="165" width="1" height="17" fill="#ffffff"/>
<rect x="1803" y="165" width="1" height="17" fill="#696969"/>
<rect x="1802" y="165" width="1" height="17" fill="#a0a0a0"/>
<text x="1765" y="177" font-size="11.5" fill="#000" textLength="22" lengthAdjust="spacingAndGlyphs" >User</text>
<rect x="1804" y="164" width="41" height="18" fill="#f0f0f0" />
<rect x="1805" y="164" width="39" height="1" fill="#ffffff"/>
<rect x="1804" y="165" width="1" height="17" fill="#ffffff"/>
<rect x="1844" y="165" width="1" height="17" fill="#696969"/>
<rect x="1843" y="165" width="1" height="17" fill="#a0a0a0"/>
<text x="1808" y="177" font-size="11.5" fill="#000" textLength="21.6" lengthAdjust="spacingAndGlyphs" >Test</text>
<rect x="1630" y="162" width="45" height="20" fill="#f0f0f0" />
<rect x="1631" y="162" width="43" height="1" fill="#ffffff"/>
<rect x="1630" y="163" width="1" height="19" fill="#ffffff"/>
<rect x="1674" y="163" width="1" height="19" fill="#696969"/>
<rect x="1673" y="163" width="1" height="19" fill="#a0a0a0"/>
<text x="1637" y="175" font-size="11.5" fill="#000" textLength="25" lengthAdjust="spacingAndGlyphs" >Work</text>
<rect x="1631" y="181" width="43" height="2" fill="#f0f0f0" />
<rect x="1633" y="185" width="272" height="116" fill="#ffffff" />
<rect x="1633" y="185" width="272" height="1" fill="#a0a0a0"/>
<rect x="1633" y="185" width="1" height="116" fill="#a0a0a0"/>
<rect x="1634" y="186" width="270" height="1" fill="#696969"/>
<rect x="1634" y="186" width="1" height="114" fill="#696969"/>
<rect x="1633" y="300" width="272" height="1" fill="#ffffff"/>
<rect x="1904" y="185" width="1" height="116" fill="#ffffff"/>
<rect x="1634" y="299" width="270" height="1" fill="#e3e3e3"/>
<rect x="1903" y="186" width="1" height="114" fill="#e3e3e3"/>
<rect x="1635" y="186" width="50" height="17" fill="#f0f0f0" />
<rect x="1635" y="186" width="50" height="1" fill="#ffffff"/>
<rect x="1635" y="186" width="1" height="17" fill="#ffffff"/>
<rect x="1635" y="202" width="50" height="1" fill="#696969"/>
<rect x="1684" y="186" width="1" height="17" fill="#696969"/>
<rect x="1636" y="201" width="48" height="1" fill="#a0a0a0"/>
<rect x="1683" y="187" width="1" height="15" fill="#a0a0a0"/>
<text x="1640" y="198.5" font-size="11.5" fill="#000" textLength="27" lengthAdjust="spacingAndGlyphs" >Layer</text>
<rect x="1685" y="186" width="125" height="17" fill="#f0f0f0" />
<rect x="1685" y="186" width="125" height="1" fill="#ffffff"/>
<rect x="1685" y="186" width="1" height="17" fill="#ffffff"/>
<rect x="1685" y="202" width="125" height="1" fill="#696969"/>
<rect x="1809" y="186" width="1" height="17" fill="#696969"/>
<rect x="1686" y="201" width="123" height="1" fill="#a0a0a0"/>
<rect x="1808" y="187" width="1" height="15" fill="#a0a0a0"/>
<text x="1746.5" y="198.5" font-size="11.5" fill="#000" text-anchor="middle" textLength="26" lengthAdjust="spacingAndGlyphs" >Mode</text>
<rect x="1810" y="186" width="50" height="17" fill="#f0f0f0" />
<rect x="1810" y="186" width="50" height="1" fill="#ffffff"/>
<rect x="1810" y="186" width="1" height="17" fill="#ffffff"/>
<rect x="1810" y="202" width="50" height="1" fill="#696969"/>
<rect x="1859" y="186" width="1" height="17" fill="#696969"/>
<rect x="1811" y="201" width="48" height="1" fill="#a0a0a0"/>
<rect x="1858" y="187" width="1" height="15" fill="#a0a0a0"/>
<text x="1834.5" y="198.5" font-size="11.5" fill="#000" text-anchor="middle" textLength="35" lengthAdjust="spacingAndGlyphs" >Output</text>
<rect x="1860" y="186" width="44" height="17" fill="#f0f0f0" />
<rect x="1860" y="186" width="44" height="1" fill="#ffffff"/>
<rect x="1860" y="186" width="1" height="17" fill="#ffffff"/>
<rect x="1860" y="202" width="44" height="1" fill="#696969"/>
<rect x="1903" y="186" width="1" height="17" fill="#696969"/>
<rect x="1861" y="201" width="42" height="1" fill="#a0a0a0"/>
<rect x="1902" y="187" width="1" height="15" fill="#a0a0a0"/>
<text x="1883.5" y="198.5" font-size="11.5" fill="#000" text-anchor="middle" textLength="21.6" lengthAdjust="spacingAndGlyphs" >Hide</text>
<rect x="1635" y="218" width="269" height="1" fill="#e8e8e8"/>
<rect x="1635" y="232" width="269" height="1" fill="#e8e8e8"/>
<rect x="1635" y="246" width="269" height="1" fill="#e8e8e8"/>
<rect x="1635" y="260" width="269" height="1" fill="#e8e8e8"/>
<rect x="1635" y="274" width="269" height="1" fill="#e8e8e8"/>
<rect x="1685" y="203" width="1" height="82" fill="#e8e8e8"/>
<rect x="1810" y="203" width="1" height="82" fill="#e8e8e8"/>
<rect x="1860" y="203" width="1" height="82" fill="#e8e8e8"/>
<rect x="1635" y="205" width="49" height="13" fill="#000000" />
<rect x="1686" y="205" width="123" height="13" fill="#0000cd" />
<rect x="1811" y="205" width="48" height="13" fill="#0000cd" />
<rect x="1861" y="205" width="43" height="13" fill="#0000cd" />
<text x="1746.5" y="215.5" font-size="11.5" fill="#fff" text-anchor="middle" textLength="51" lengthAdjust="spacingAndGlyphs" >Laser Cut</text>
<text x="1834.5" y="215.5" font-size="11.5" fill="#fff" text-anchor="middle" textLength="19.5" lengthAdjust="spacingAndGlyphs" >Yes</text>
<text x="1885" y="215.5" font-size="11.5" fill="#fff" text-anchor="middle" textLength="14.5" lengthAdjust="spacingAndGlyphs" >No</text>
<rect x="1635" y="285" width="269" height="15" fill="#f0f0f0" />
<rect x="1652" y="285" width="230" height="15" fill="#c8c8c8" />
<path d="M1645.5 289 L1642 292.5 L1645.5 296" fill="none" stroke="#606060" stroke-width="1.8" shape-rendering="geometricPrecision"/>
<path d="M1893.5 289 L1897 292.5 L1893.5 296" fill="none" stroke="#606060" stroke-width="1.8" shape-rendering="geometricPrecision"/>
<rect x="1633" y="306" width="272" height="145" fill="#ffffff" />
<rect x="1633" y="306" width="272" height="1" fill="#a0a0a0"/>
<rect x="1633" y="306" width="1" height="145" fill="#a0a0a0"/>
<rect x="1634" y="307" width="270" height="1" fill="#696969"/>
<rect x="1634" y="307" width="1" height="143" fill="#696969"/>
<rect x="1633" y="450" width="272" height="1" fill="#ffffff"/>
<rect x="1904" y="306" width="1" height="145" fill="#ffffff"/>
<rect x="1634" y="449" width="270" height="1" fill="#e3e3e3"/>
<rect x="1903" y="307" width="1" height="143" fill="#e3e3e3"/>
<rect x="1635" y="308" width="132" height="18" fill="#dadada" />
<rect x="1635" y="325" width="132" height="1" fill="#e6e6e6"/>
<rect x="1771" y="326" width="133" height="1" fill="#e6e6e6"/>
<rect x="1635" y="327" width="132" height="19" fill="#dadada" />
<rect x="1635" y="345" width="132" height="1" fill="#e6e6e6"/>
<rect x="1771" y="346" width="133" height="1" fill="#e6e6e6"/>
<rect x="1635" y="346" width="132" height="20" fill="#dadada" />
<rect x="1635" y="365" width="132" height="1" fill="#e6e6e6"/>
<rect x="1771" y="366" width="133" height="1" fill="#e6e6e6"/>
<rect x="1635" y="366" width="132" height="20" fill="#dadada" />
<rect x="1635" y="385" width="132" height="1" fill="#e6e6e6"/>
<rect x="1771" y="386" width="133" height="1" fill="#e6e6e6"/>
<rect x="1635" y="386" width="132" height="20" fill="#dadada" />
<rect x="1635" y="405" width="132" height="1" fill="#e6e6e6"/>
<rect x="1771" y="406" width="133" height="1" fill="#e6e6e6"/>
<text x="1637.5" y="321.5" font-size="11.5" fill="#000" textLength="24.5" lengthAdjust="spacingAndGlyphs" >Color</text>
<text x="1637.5" y="340.5" font-size="11.5" fill="#000" textLength="62.5" lengthAdjust="spacingAndGlyphs" >Speed(mm/s)</text>
<text x="1637.5" y="359.5" font-size="11.5" fill="#000" textLength="75" lengthAdjust="spacingAndGlyphs" >MinPower(%)-1</text>
<text x="1637.5" y="379.5" font-size="11.5" fill="#000" textLength="79" lengthAdjust="spacingAndGlyphs" >MaxPower(%)-1</text>
<text x="1637.5" y="399.5" font-size="11.5" fill="#000" textLength="33.5" lengthAdjust="spacingAndGlyphs" >Priority</text>
<rect x="1771" y="310" width="131" height="16" fill="#000000" />
<text x="1772" y="342" font-size="11.5" fill="#000" textLength="27" lengthAdjust="spacingAndGlyphs" >15.00</text>
<text x="1771.5" y="362" font-size="11.5" fill="#000" textLength="22" lengthAdjust="spacingAndGlyphs" >65.0</text>
<text x="1771.5" y="382" font-size="11.5" fill="#000" textLength="22" lengthAdjust="spacingAndGlyphs" >65.0</text>
<text x="1772.5" y="402" font-size="11.5" fill="#000" >1</text>
<rect x="1635" y="453" width="41" height="21" fill="#f0f0f0" />
<rect x="1635" y="453" width="41" height="1" fill="#ffffff"/>
<rect x="1635" y="453" width="1" height="21" fill="#ffffff"/>
<rect x="1635" y="473" width="41" height="1" fill="#696969"/>
<rect x="1675" y="453" width="1" height="21" fill="#696969"/>
<rect x="1636" y="472" width="39" height="1" fill="#a0a0a0"/>
<rect x="1674" y="454" width="1" height="19" fill="#a0a0a0"/>
<rect x="1676" y="453" width="44" height="21" fill="#f0f0f0" />
<rect x="1676" y="453" width="44" height="1" fill="#ffffff"/>
<rect x="1676" y="453" width="1" height="21" fill="#ffffff"/>
<rect x="1676" y="473" width="44" height="1" fill="#696969"/>
<rect x="1719" y="453" width="1" height="21" fill="#696969"/>
<rect x="1677" y="472" width="42" height="1" fill="#a0a0a0"/>
<rect x="1718" y="454" width="1" height="19" fill="#a0a0a0"/>
<text x="1638.5" y="467" font-size="11.5" fill="#000" textLength="32.5" lengthAdjust="spacingAndGlyphs" >Laser1</text>
<text x="1680" y="467" font-size="11.5" fill="#000" textLength="32.5" lengthAdjust="spacingAndGlyphs" >Laser2</text>
<rect x="1633.5" y="486.5" width="274" height="100" fill="none" stroke="#a0a0a0"/>
<rect x="1634.5" y="487.5" width="273" height="99" fill="none" stroke="#ffffff" opacity="0.9"/>
<rect x="1633.5" y="486.5" width="274" height="100" fill="none" stroke="#a0a0a0"/>
<rect x="1639" y="479" width="91" height="12" fill="#f0f0f0" />
<text x="1641" y="490.5" font-size="11.5" fill="#000" textLength="86" lengthAdjust="spacingAndGlyphs" >Line/column setup</text>
<text x="1661" y="505" font-size="11.5" fill="#000" textLength="21" lengthAdjust="spacingAndGlyphs" >Num</text>
<text x="1697.5" y="505" font-size="11.5" fill="#000" textLength="34" lengthAdjust="spacingAndGlyphs" >space1</text>
<text x="1747.5" y="505" font-size="11.5" fill="#000" textLength="34.5" lengthAdjust="spacingAndGlyphs" >space2</text>
<text x="1790" y="505" font-size="11.5" fill="#000" textLength="48.5" lengthAdjust="spacingAndGlyphs" >Dislocation</text>
<rect x="1786" y="494" width="4" height="14" fill="#f0f0f0" />
<text x="1856.5" y="505" font-size="11.5" fill="#000" textLength="27.5" lengthAdjust="spacingAndGlyphs" >Mirror</text>
<text x="1641" y="526" font-size="11.5" fill="#000" >X:</text>
<text x="1641" y="547" font-size="11.5" fill="#000" >Y:</text>
<rect x="1655" y="510" width="34" height="19" fill="#f0f0f0" />
<rect x="1655" y="510" width="34" height="1" fill="#a0a0a0"/>
<rect x="1655" y="510" width="1" height="19" fill="#a0a0a0"/>
<rect x="1656" y="511" width="32" height="1" fill="#696969"/>
<rect x="1656" y="511" width="1" height="17" fill="#696969"/>
<rect x="1655" y="528" width="34" height="1" fill="#ffffff"/>
<rect x="1688" y="510" width="1" height="19" fill="#ffffff"/>
<rect x="1656" y="527" width="32" height="1" fill="#e3e3e3"/>
<rect x="1687" y="511" width="1" height="17" fill="#e3e3e3"/>
<rect x="1655" y="531" width="34" height="19" fill="#f0f0f0" />
<rect x="1655" y="531" width="34" height="1" fill="#a0a0a0"/>
<rect x="1655" y="531" width="1" height="19" fill="#a0a0a0"/>
<rect x="1656" y="532" width="32" height="1" fill="#696969"/>
<rect x="1656" y="532" width="1" height="17" fill="#696969"/>
<rect x="1655" y="549" width="34" height="1" fill="#ffffff"/>
<rect x="1688" y="531" width="1" height="19" fill="#ffffff"/>
<rect x="1656" y="548" width="32" height="1" fill="#e3e3e3"/>
<rect x="1687" y="532" width="1" height="17" fill="#e3e3e3"/>
<rect x="1691" y="510" width="47" height="19" fill="#f0f0f0" />
<rect x="1691" y="510" width="47" height="1" fill="#a0a0a0"/>
<rect x="1691" y="510" width="1" height="19" fill="#a0a0a0"/>
<rect x="1692" y="511" width="45" height="1" fill="#696969"/>
<rect x="1692" y="511" width="1" height="17" fill="#696969"/>
<rect x="1691" y="528" width="47" height="1" fill="#ffffff"/>
<rect x="1737" y="510" width="1" height="19" fill="#ffffff"/>
<rect x="1692" y="527" width="45" height="1" fill="#e3e3e3"/>
<rect x="1736" y="511" width="1" height="17" fill="#e3e3e3"/>
<rect x="1691" y="531" width="47" height="19" fill="#f0f0f0" />
<rect x="1691" y="531" width="47" height="1" fill="#a0a0a0"/>
<rect x="1691" y="531" width="1" height="19" fill="#a0a0a0"/>
<rect x="1692" y="532" width="45" height="1" fill="#696969"/>
<rect x="1692" y="532" width="1" height="17" fill="#696969"/>
<rect x="1691" y="549" width="47" height="1" fill="#ffffff"/>
<rect x="1737" y="531" width="1" height="19" fill="#ffffff"/>
<rect x="1692" y="548" width="45" height="1" fill="#e3e3e3"/>
<rect x="1736" y="532" width="1" height="17" fill="#e3e3e3"/>
<rect x="1741" y="510" width="47" height="19" fill="#f0f0f0" />
<rect x="1741" y="510" width="47" height="1" fill="#a0a0a0"/>
<rect x="1741" y="510" width="1" height="19" fill="#a0a0a0"/>
<rect x="1742" y="511" width="45" height="1" fill="#696969"/>
<rect x="1742" y="511" width="1" height="17" fill="#696969"/>
<rect x="1741" y="528" width="47" height="1" fill="#ffffff"/>
<rect x="1787" y="510" width="1" height="19" fill="#ffffff"/>
<rect x="1742" y="527" width="45" height="1" fill="#e3e3e3"/>
<rect x="1786" y="511" width="1" height="17" fill="#e3e3e3"/>
<rect x="1741" y="531" width="47" height="19" fill="#f0f0f0" />
<rect x="1741" y="531" width="47" height="1" fill="#a0a0a0"/>
<rect x="1741" y="531" width="1" height="19" fill="#a0a0a0"/>
<rect x="1742" y="532" width="45" height="1" fill="#696969"/>
<rect x="1742" y="532" width="1" height="17" fill="#696969"/>
<rect x="1741" y="549" width="47" height="1" fill="#ffffff"/>
<rect x="1787" y="531" width="1" height="19" fill="#ffffff"/>
<rect x="1742" y="548" width="45" height="1" fill="#e3e3e3"/>
<rect x="1786" y="532" width="1" height="17" fill="#e3e3e3"/>
<rect x="1790" y="510" width="47" height="19" fill="#f0f0f0" />
<rect x="1790" y="510" width="47" height="1" fill="#a0a0a0"/>
<rect x="1790" y="510" width="1" height="19" fill="#a0a0a0"/>
<rect x="1791" y="511" width="45" height="1" fill="#696969"/>
<rect x="1791" y="511" width="1" height="17" fill="#696969"/>
<rect x="1790" y="528" width="47" height="1" fill="#ffffff"/>
<rect x="1836" y="510" width="1" height="19" fill="#ffffff"/>
<rect x="1791" y="527" width="45" height="1" fill="#e3e3e3"/>
<rect x="1835" y="511" width="1" height="17" fill="#e3e3e3"/>
<rect x="1790" y="531" width="47" height="19" fill="#f0f0f0" />
<rect x="1790" y="531" width="47" height="1" fill="#a0a0a0"/>
<rect x="1790" y="531" width="1" height="19" fill="#a0a0a0"/>
<rect x="1791" y="532" width="45" height="1" fill="#696969"/>
<rect x="1791" y="532" width="1" height="17" fill="#696969"/>
<rect x="1790" y="549" width="47" height="1" fill="#ffffff"/>
<rect x="1836" y="531" width="1" height="19" fill="#ffffff"/>
<rect x="1791" y="548" width="45" height="1" fill="#e3e3e3"/>
<rect x="1835" y="532" width="1" height="17" fill="#e3e3e3"/>
<text x="1661.5" y="524.5" font-size="11.5" fill="#8a8a8a" >1</text>
<text x="1661.5" y="545.5" font-size="11.5" fill="#8a8a8a" >1</text>
<text x="1696.5" y="524.5" font-size="11.5" fill="#8a8a8a" textLength="28" lengthAdjust="spacingAndGlyphs" >0.000</text>
<text x="1696.5" y="545.5" font-size="11.5" fill="#8a8a8a" textLength="28" lengthAdjust="spacingAndGlyphs" >0.000</text>
<text x="1746.5" y="524.5" font-size="11.5" fill="#8a8a8a" textLength="28" lengthAdjust="spacingAndGlyphs" >0.000</text>
<text x="1746.5" y="545.5" font-size="11.5" fill="#8a8a8a" textLength="28" lengthAdjust="spacingAndGlyphs" >0.000</text>
<text x="1795.5" y="524.5" font-size="11.5" fill="#8a8a8a" textLength="28" lengthAdjust="spacingAndGlyphs" >0.000</text>
<text x="1795.5" y="545.5" font-size="11.5" fill="#8a8a8a" textLength="28" lengthAdjust="spacingAndGlyphs" >0.000</text>
<rect x="1840.5" y="510.5" width="62" height="41" fill="none" stroke="#696969"/>
<rect x="1845" y="515" width="12" height="12" fill="#f0f0f0" />
<rect x="1845" y="515" width="12" height="1" fill="#a0a0a0"/>
<rect x="1845" y="515" width="1" height="12" fill="#a0a0a0"/>
<rect x="1846" y="516" width="10" height="1" fill="#696969"/>
<rect x="1846" y="516" width="1" height="10" fill="#696969"/>
<rect x="1845" y="526" width="12" height="1" fill="#ffffff"/>
<rect x="1856" y="515" width="1" height="12" fill="#ffffff"/>
<rect x="1846" y="525" width="10" height="1" fill="#e3e3e3"/>
<rect x="1855" y="516" width="1" height="10" fill="#e3e3e3"/>
<rect x="1873" y="515" width="12" height="12" fill="#f0f0f0" />
<rect x="1873" y="515" width="12" height="1" fill="#a0a0a0"/>
<rect x="1873" y="515" width="1" height="12" fill="#a0a0a0"/>
<rect x="1874" y="516" width="10" height="1" fill="#696969"/>
<rect x="1874" y="516" width="1" height="10" fill="#696969"/>
<rect x="1873" y="526" width="12" height="1" fill="#ffffff"/>
<rect x="1884" y="515" width="1" height="12" fill="#ffffff"/>
<rect x="1874" y="525" width="10" height="1" fill="#e3e3e3"/>
<rect x="1883" y="516" width="1" height="10" fill="#e3e3e3"/>
<rect x="1845" y="535" width="12" height="12" fill="#f0f0f0" />
<rect x="1845" y="535" width="12" height="1" fill="#a0a0a0"/>
<rect x="1845" y="535" width="1" height="12" fill="#a0a0a0"/>
<rect x="1846" y="536" width="10" height="1" fill="#696969"/>
<rect x="1846" y="536" width="1" height="10" fill="#696969"/>
<rect x="1845" y="546" width="12" height="1" fill="#ffffff"/>
<rect x="1856" y="535" width="1" height="12" fill="#ffffff"/>
<rect x="1846" y="545" width="10" height="1" fill="#e3e3e3"/>
<rect x="1855" y="536" width="1" height="10" fill="#e3e3e3"/>
<rect x="1873" y="535" width="12" height="12" fill="#f0f0f0" />
<rect x="1873" y="535" width="12" height="1" fill="#a0a0a0"/>
<rect x="1873" y="535" width="1" height="12" fill="#a0a0a0"/>
<rect x="1874" y="536" width="10" height="1" fill="#696969"/>
<rect x="1874" y="536" width="1" height="10" fill="#696969"/>
<rect x="1873" y="546" width="12" height="1" fill="#ffffff"/>
<rect x="1884" y="535" width="1" height="12" fill="#ffffff"/>
<rect x="1874" y="545" width="10" height="1" fill="#e3e3e3"/>
<rect x="1883" y="536" width="1" height="10" fill="#e3e3e3"/>
<text x="1862" y="526" font-size="11" fill="#a0a0a0" >H</text>
<text x="1891" y="526" font-size="11" fill="#a0a0a0" >V</text>
<text x="1862" y="546" font-size="11" fill="#a0a0a0" >H</text>
<text x="1891" y="546" font-size="11" fill="#a0a0a0" >V</text>
<rect x="1636" y="551" width="30" height="33" fill="#000000" />
<rect x="1637" y="552" width="28" height="31" fill="#f0f0f0" />
<rect x="1637" y="552" width="28" height="1" fill="#ffffff"/>
<rect x="1637" y="552" width="1" height="31" fill="#ffffff"/>
<rect x="1637" y="582" width="28" height="1" fill="#696969"/>
<rect x="1664" y="552" width="1" height="31" fill="#696969"/>
<rect x="1638" y="581" width="26" height="1" fill="#a0a0a0"/>
<rect x="1663" y="553" width="1" height="29" fill="#a0a0a0"/>
<g shape-rendering="geometricPrecision"><rect x="1639.5" y="555.5" width="23" height="24" fill="#fff" stroke="#000"/><path d="M1643.5 558 V577 M1643.5 558 H1658" stroke="#000" stroke-width="0.9" fill="none"/><path d="M1658.5 558 L1656 556.5 V559.5 Z M1643.5 578 L1642 575.5 H1645 Z" fill="#000"/><rect x="1642" y="556.5" width="3" height="3" fill="#0000d0"/><g fill="#00e0e0" stroke="#000" stroke-width="0.6"><rect x="1647.5" y="564.5" width="4" height="4"/><rect x="1653.5" y="564.5" width="4" height="4"/><rect x="1647.5" y="570.5" width="4" height="4"/><rect x="1653.5" y="570.5" width="4" height="4"/></g></g>
<rect x="1668" y="555" width="74" height="26" fill="#f0f0f0" />
<rect x="1668" y="555" width="74" height="1" fill="#ffffff"/>
<rect x="1668" y="555" width="1" height="26" fill="#ffffff"/>
<rect x="1668" y="580" width="74" height="1" fill="#696969"/>
<rect x="1741" y="555" width="1" height="26" fill="#696969"/>
<rect x="1669" y="579" width="72" height="1" fill="#a0a0a0"/>
<rect x="1740" y="556" width="1" height="24" fill="#a0a0a0"/>
<text x="1705.0" y="571.5" font-size="11.5" fill="#a0a0a0" text-anchor="middle" textLength="58.5" lengthAdjust="spacingAndGlyphs" >Virtual array</text>
<rect x="1744" y="555" width="68" height="26" fill="#f0f0f0" />
<rect x="1744" y="555" width="68" height="1" fill="#ffffff"/>
<rect x="1744" y="555" width="1" height="26" fill="#ffffff"/>
<rect x="1744" y="580" width="68" height="1" fill="#696969"/>
<rect x="1811" y="555" width="1" height="26" fill="#696969"/>
<rect x="1745" y="579" width="66" height="1" fill="#a0a0a0"/>
<rect x="1810" y="556" width="1" height="24" fill="#a0a0a0"/>
<text x="1778.0" y="571.5" font-size="11.5" fill="#a0a0a0" text-anchor="middle" textLength="50" lengthAdjust="spacingAndGlyphs" >Bestrew...</text>
<rect x="1813" y="555" width="56" height="26" fill="#f0f0f0" />
<rect x="1813" y="555" width="56" height="1" fill="#ffffff"/>
<rect x="1813" y="555" width="1" height="26" fill="#ffffff"/>
<rect x="1813" y="580" width="56" height="1" fill="#696969"/>
<rect x="1868" y="555" width="1" height="26" fill="#696969"/>
<rect x="1814" y="579" width="54" height="1" fill="#a0a0a0"/>
<rect x="1867" y="556" width="1" height="24" fill="#a0a0a0"/>
<text x="1841.0" y="571.5" font-size="11.5" fill="#a0a0a0" text-anchor="middle" textLength="35.5" lengthAdjust="spacingAndGlyphs" >Nesting</text>
<rect x="1870" y="555" width="32" height="26" fill="#f0f0f0" />
<rect x="1870" y="555" width="32" height="1" fill="#ffffff"/>
<rect x="1870" y="555" width="1" height="26" fill="#ffffff"/>
<rect x="1870" y="580" width="32" height="1" fill="#696969"/>
<rect x="1901" y="555" width="1" height="26" fill="#696969"/>
<rect x="1871" y="579" width="30" height="1" fill="#a0a0a0"/>
<rect x="1900" y="556" width="1" height="24" fill="#a0a0a0"/>
<text x="1886.0" y="571.5" font-size="11.5" fill="#000" text-anchor="middle" textLength="10" lengthAdjust="spacingAndGlyphs" >...</text>
<rect x="1629" y="596" width="288" height="1" fill="#696969"/>
<rect x="1629" y="597" width="288" height="1" fill="#ffffff"/>
<rect x="1624" y="744" width="296" height="1" fill="#a0a0a0"/>
<rect x="1624" y="745" width="296" height="1" fill="#ffffff"/>
<rect x="1628" y="752" width="274" height="1" fill="#a0a0a0"/>
<rect x="1628" y="753" width="274" height="1" fill="#ffffff"/>
<rect x="1628" y="755" width="274" height="1" fill="#a0a0a0"/>
<rect x="1628" y="756" width="274" height="1" fill="#ffffff"/>
<rect x="1901" y="751" width="1" height="5" fill="#a0a0a0"/>
<path d="M1907.5 750.5 L1913.5 756.5 M1913.5 750.5 L1907.5 756.5" stroke="#000" stroke-width="1.8" shape-rendering="geometricPrecision"/>
<rect x="1630.5" y="767.5" width="285" height="145" fill="none" stroke="#a0a0a0"/>
<rect x="1631.5" y="768.5" width="284" height="144" fill="none" stroke="#ffffff" opacity="0.9"/>
<rect x="1630.5" y="767.5" width="285" height="145" fill="none" stroke="#a0a0a0"/>
<rect x="1636" y="761" width="57" height="12" fill="#f0f0f0" />
<text x="1638" y="772" font-size="11.5" fill="#000" textLength="52.5" lengthAdjust="spacingAndGlyphs" >Laser work</text>
<rect x="1639" y="778" width="92" height="22" fill="#f0f0f0" />
<rect x="1639" y="778" width="92" height="1" fill="#ffffff"/>
<rect x="1639" y="778" width="1" height="22" fill="#ffffff"/>
<rect x="1639" y="799" width="92" height="1" fill="#696969"/>
<rect x="1730" y="778" width="1" height="22" fill="#696969"/>
<rect x="1640" y="798" width="90" height="1" fill="#a0a0a0"/>
<rect x="1729" y="779" width="1" height="20" fill="#a0a0a0"/>
<text x="1685.0" y="792" font-size="11.5" fill="#000" text-anchor="middle" textLength="24.5" lengthAdjust="spacingAndGlyphs" >Start</text>
<rect x="1732" y="778" width="101" height="22" fill="#f0f0f0" />
<rect x="1732" y="778" width="101" height="1" fill="#ffffff"/>
<rect x="1732" y="778" width="1" height="22" fill="#ffffff"/>
<rect x="1732" y="799" width="101" height="1" fill="#696969"/>
<rect x="1832" y="778" width="1" height="22" fill="#696969"/>
<rect x="1733" y="798" width="99" height="1" fill="#a0a0a0"/>
<rect x="1831" y="779" width="1" height="20" fill="#a0a0a0"/>
<text x="1782.5" y="792" font-size="11.5" fill="#000" text-anchor="middle" textLength="75.5" lengthAdjust="spacingAndGlyphs" >Pause/Continue</text>
<rect x="1834" y="778" width="72" height="22" fill="#f0f0f0" />
<rect x="1834" y="778" width="72" height="1" fill="#ffffff"/>
<rect x="1834" y="778" width="1" height="22" fill="#ffffff"/>
<rect x="1834" y="799" width="72" height="1" fill="#696969"/>
<rect x="1905" y="778" width="1" height="22" fill="#696969"/>
<rect x="1835" y="798" width="70" height="1" fill="#a0a0a0"/>
<rect x="1904" y="779" width="1" height="20" fill="#a0a0a0"/>
<text x="1870.0" y="792" font-size="11.5" fill="#000" text-anchor="middle" textLength="21.7" lengthAdjust="spacingAndGlyphs" >Stop</text>
<rect x="1639" y="803" width="92" height="22" fill="#f0f0f0" />
<rect x="1639" y="803" width="92" height="1" fill="#ffffff"/>
<rect x="1639" y="803" width="1" height="22" fill="#ffffff"/>
<rect x="1639" y="824" width="92" height="1" fill="#696969"/>
<rect x="1730" y="803" width="1" height="22" fill="#696969"/>
<rect x="1640" y="823" width="90" height="1" fill="#a0a0a0"/>
<rect x="1729" y="804" width="1" height="20" fill="#a0a0a0"/>
<text x="1685.0" y="817" font-size="11.5" fill="#000" text-anchor="middle" textLength="58.7" lengthAdjust="spacingAndGlyphs" >SaveToUFile</text>
<rect x="1732" y="803" width="101" height="22" fill="#f0f0f0" />
<rect x="1732" y="803" width="101" height="1" fill="#ffffff"/>
<rect x="1732" y="803" width="1" height="22" fill="#ffffff"/>
<rect x="1732" y="824" width="101" height="1" fill="#696969"/>
<rect x="1832" y="803" width="1" height="22" fill="#696969"/>
<rect x="1733" y="823" width="99" height="1" fill="#a0a0a0"/>
<rect x="1831" y="804" width="1" height="20" fill="#a0a0a0"/>
<text x="1782.5" y="817" font-size="11.5" fill="#000" text-anchor="middle" textLength="57.8" lengthAdjust="spacingAndGlyphs" >UFileOutput</text>
<rect x="1834" y="803" width="72" height="22" fill="#f0f0f0" />
<rect x="1834" y="803" width="72" height="1" fill="#ffffff"/>
<rect x="1834" y="803" width="1" height="22" fill="#ffffff"/>
<rect x="1834" y="824" width="72" height="1" fill="#696969"/>
<rect x="1905" y="803" width="1" height="22" fill="#696969"/>
<rect x="1835" y="823" width="70" height="1" fill="#a0a0a0"/>
<rect x="1904" y="804" width="1" height="20" fill="#a0a0a0"/>
<text x="1870.0" y="817" font-size="11.5" fill="#000" text-anchor="middle" textLength="46.6" lengthAdjust="spacingAndGlyphs" >Download</text>
<text x="1689.5" y="847.5" font-size="11.5" fill="#000" textLength="40" lengthAdjust="spacingAndGlyphs" >Position:</text>
<rect x="1735" y="829" width="172" height="20" fill="#ffffff" />
<rect x="1735" y="829" width="172" height="1" fill="#a0a0a0"/>
<rect x="1735" y="829" width="1" height="20" fill="#a0a0a0"/>
<rect x="1736" y="830" width="170" height="1" fill="#696969"/>
<rect x="1736" y="830" width="1" height="18" fill="#696969"/>
<rect x="1735" y="848" width="172" height="1" fill="#ffffff"/>
<rect x="1906" y="829" width="1" height="20" fill="#ffffff"/>
<rect x="1736" y="847" width="170" height="1" fill="#e3e3e3"/>
<rect x="1905" y="830" width="1" height="18" fill="#e3e3e3"/>
<text x="1739" y="843.5" font-size="11.5" fill="#000" textLength="76" lengthAdjust="spacingAndGlyphs" >Current position</text>
<rect x="1889" y="831" width="16" height="16" fill="#f0f0f0" />
<rect x="1889" y="831" width="16" height="1" fill="#ffffff"/>
<rect x="1889" y="831" width="1" height="16" fill="#ffffff"/>
<rect x="1889" y="846" width="16" height="1" fill="#696969"/>
<rect x="1904" y="831" width="1" height="16" fill="#696969"/>
<rect x="1890" y="845" width="14" height="1" fill="#a0a0a0"/>
<rect x="1903" y="832" width="1" height="14" fill="#a0a0a0"/>
<path d="M1893 837 H1901 L1897 841 Z" fill="#000"/>
<rect x="1639" y="861" width="12" height="12" fill="#ffffff" />
<rect x="1639" y="861" width="12" height="1" fill="#a0a0a0"/>
<rect x="1639" y="861" width="1" height="12" fill="#a0a0a0"/>
<rect x="1640" y="862" width="10" height="1" fill="#696969"/>
<rect x="1640" y="862" width="1" height="10" fill="#696969"/>
<rect x="1639" y="872" width="12" height="1" fill="#ffffff"/>
<rect x="1650" y="861" width="1" height="12" fill="#ffffff"/>
<rect x="1640" y="871" width="10" height="1" fill="#e3e3e3"/>
<rect x="1649" y="862" width="1" height="10" fill="#e3e3e3"/>
<path d="M1641.5 866.5 L1644.5 869.5 L1649 863.5" fill="none" stroke="#000" stroke-width="1.8" shape-rendering="geometricPrecision"/>
<text x="1656" y="871.5" font-size="11.5" fill="#000" textLength="64" lengthAdjust="spacingAndGlyphs" >Path optimize</text>
<rect x="1639" y="876" width="12" height="12" fill="#ffffff" />
<rect x="1639" y="876" width="12" height="1" fill="#a0a0a0"/>
<rect x="1639" y="876" width="1" height="12" fill="#a0a0a0"/>
<rect x="1640" y="877" width="10" height="1" fill="#696969"/>
<rect x="1640" y="877" width="1" height="10" fill="#696969"/>
<rect x="1639" y="887" width="12" height="1" fill="#ffffff"/>
<rect x="1650" y="876" width="1" height="12" fill="#ffffff"/>
<rect x="1640" y="886" width="10" height="1" fill="#e3e3e3"/>
<rect x="1649" y="877" width="1" height="10" fill="#e3e3e3"/>
<text x="1656.5" y="886.5" font-size="11.5" fill="#000" textLength="107.5" lengthAdjust="spacingAndGlyphs" >Output select graphics</text>
<rect x="1656" y="894" width="12" height="12" fill="#f0f0f0" />
<rect x="1656" y="894" width="12" height="1" fill="#a0a0a0"/>
<rect x="1656" y="894" width="1" height="12" fill="#a0a0a0"/>
<rect x="1657" y="895" width="10" height="1" fill="#696969"/>
<rect x="1657" y="895" width="1" height="10" fill="#696969"/>
<rect x="1656" y="905" width="12" height="1" fill="#ffffff"/>
<rect x="1667" y="894" width="1" height="12" fill="#ffffff"/>
<rect x="1657" y="904" width="10" height="1" fill="#e3e3e3"/>
<rect x="1666" y="895" width="1" height="10" fill="#e3e3e3"/>
<text x="1674" y="904.5" font-size="11.5" fill="#a0a0a0" textLength="123" lengthAdjust="spacingAndGlyphs" >Selected graphics position</text>
<rect x="1834" y="860" width="72" height="23" fill="#f0f0f0" />
<rect x="1834" y="860" width="72" height="1" fill="#ffffff"/>
<rect x="1834" y="860" width="1" height="23" fill="#ffffff"/>
<rect x="1834" y="882" width="72" height="1" fill="#696969"/>
<rect x="1905" y="860" width="1" height="23" fill="#696969"/>
<rect x="1835" y="881" width="70" height="1" fill="#a0a0a0"/>
<rect x="1904" y="861" width="1" height="21" fill="#a0a0a0"/>
<text x="1870.0" y="874.5" font-size="11.5" fill="#000" text-anchor="middle" textLength="43.3" lengthAdjust="spacingAndGlyphs" >Cut scale</text>
<rect x="1834" y="885" width="72" height="23" fill="#f0f0f0" />
<rect x="1834" y="885" width="72" height="1" fill="#ffffff"/>
<rect x="1834" y="885" width="1" height="23" fill="#ffffff"/>
<rect x="1834" y="907" width="72" height="1" fill="#696969"/>
<rect x="1905" y="885" width="1" height="23" fill="#696969"/>
<rect x="1835" y="906" width="70" height="1" fill="#a0a0a0"/>
<rect x="1904" y="886" width="1" height="21" fill="#a0a0a0"/>
<text x="1870.0" y="899.5" font-size="11.5" fill="#000" text-anchor="middle" textLength="40" lengthAdjust="spacingAndGlyphs" >Go scale</text>
<rect x="1630.5" y="923.5" width="285" height="41" fill="none" stroke="#a0a0a0"/>
<rect x="1631.5" y="924.5" width="284" height="40" fill="none" stroke="#ffffff" opacity="0.9"/>
<rect x="1630.5" y="923.5" width="285" height="41" fill="none" stroke="#a0a0a0"/>
<rect x="1636" y="917" width="36" height="12" fill="#f0f0f0" />
<text x="1638" y="927.5" font-size="11.5" fill="#000" textLength="32" lengthAdjust="spacingAndGlyphs" >Device</text>
<rect x="1639" y="935" width="92" height="23" fill="#f0f0f0" />
<rect x="1639" y="935" width="92" height="1" fill="#ffffff"/>
<rect x="1639" y="935" width="1" height="23" fill="#ffffff"/>
<rect x="1639" y="957" width="92" height="1" fill="#696969"/>
<rect x="1730" y="935" width="1" height="23" fill="#696969"/>
<rect x="1640" y="956" width="90" height="1" fill="#a0a0a0"/>
<rect x="1729" y="936" width="1" height="21" fill="#a0a0a0"/>
<text x="1685.0" y="949" font-size="11.5" fill="#000" text-anchor="middle" textLength="33.3" lengthAdjust="spacingAndGlyphs" >Setting</text>
<rect x="1735" y="937" width="172" height="20" fill="#ffffff" />
<rect x="1735" y="937" width="172" height="1" fill="#a0a0a0"/>
<rect x="1735" y="937" width="1" height="20" fill="#a0a0a0"/>
<rect x="1736" y="938" width="170" height="1" fill="#696969"/>
<rect x="1736" y="938" width="1" height="18" fill="#696969"/>
<rect x="1735" y="956" width="172" height="1" fill="#ffffff"/>
<rect x="1906" y="937" width="1" height="20" fill="#ffffff"/>
<rect x="1736" y="955" width="170" height="1" fill="#e3e3e3"/>
<rect x="1905" y="938" width="1" height="18" fill="#e3e3e3"/>
<text x="1738.5" y="951.5" font-size="11.5" fill="#000" textLength="98" lengthAdjust="spacingAndGlyphs" >Device---(USB:Auto)</text>
<rect x="1889" y="939" width="16" height="16" fill="#f0f0f0" />
<rect x="1889" y="939" width="16" height="1" fill="#ffffff"/>
<rect x="1889" y="939" width="1" height="16" fill="#ffffff"/>
<rect x="1889" y="954" width="16" height="1" fill="#696969"/>
<rect x="1904" y="939" width="1" height="16" fill="#696969"/>
<rect x="1890" y="953" width="14" height="1" fill="#a0a0a0"/>
<rect x="1903" y="940" width="1" height="14" fill="#a0a0a0"/>
<path d="M1893 945 H1901 L1897 949 Z" fill="#000"/>
<rect x="1624" y="984" width="296" height="1" fill="#a0a0a0"/>
<rect x="1624" y="985" width="296" height="1" fill="#ffffff"/>
<g fill="#000" fill-opacity="0.22"><text x="1599.5" y="964.5" font-size="18" textLength="156" lengthAdjust="spacingAndGlyphs">Activate Windows</text><text x="1599.5" y="984.5" font-size="14" textLength="235" lengthAdjust="spacingAndGlyphs">Go to Settings to activate Windows.</text></g>
<rect x="4" y="148" width="2" height="2" fill="#c8c8c8"/>
<g><rect x="5" y="148" width="2" height="2" fill="#c8c8c8"/><rect x="10" y="148" width="2" height="2" fill="#c8c8c8"/><rect x="15" y="148" width="2" height="2" fill="#c8c8c8"/><rect x="20" y="148" width="2" height="2" fill="#c8c8c8"/><rect x="25" y="148" width="2" height="2" fill="#c8c8c8"/></g>
<rect x="1" y="152" width="29" height="1" fill="#a0a0a0"/>
<rect x="1" y="153" width="29" height="30" fill="#f8f8f8" />
<rect x="1" y="153" width="1" height="30" fill="#a0a0a0"/>
<g fill="#ffffff"><rect x="29" y="154" width="1" height="1"/><rect x="29" y="156" width="1" height="1"/><rect x="29" y="158" width="1" height="1"/><rect x="29" y="160" width="1" height="1"/><rect x="29" y="162" width="1" height="1"/><rect x="29" y="164" width="1" height="1"/><rect x="29" y="166" width="1" height="1"/><rect x="29" y="168" width="1" height="1"/><rect x="29" y="170" width="1" height="1"/><rect x="29" y="172" width="1" height="1"/><rect x="29" y="174" width="1" height="1"/><rect x="29" y="176" width="1" height="1"/><rect x="29" y="178" width="1" height="1"/><rect x="29" y="180" width="1" height="1"/><rect x="29" y="182" width="1" height="1"/></g>
<g shape-rendering="geometricPrecision"><path d="M9.5 158.5 L22.5 166 L17.5 168 L21.5 175 L18.5 176.5 L14.5 169.5 L10.5 173 Z" fill="#dff5e4" stroke="#2c7a3a" stroke-width="1.1"/></g>
<g shape-rendering="geometricPrecision"><path d="M4 193 C9 190 15 187 24 187.5" fill="none" stroke="#707070" stroke-width="1.6"/><path d="M11.5 189.5 L23.5 200.5 L13 206 Z" fill="#c8cce8" stroke="#222" stroke-width="1.2"/><rect x="9.5" y="188" width="3" height="3" fill="#fff" stroke="#2a6ad0" stroke-width="0.9"/></g>
<rect x="2" y="215" width="27" height="1" fill="#a0a0a0"/>
<rect x="2" y="216" width="27" height="1" fill="#ffffff"/>
<g shape-rendering="geometricPrecision"><path d="M7 240 L22.5 225" stroke="#808080" stroke-width="1.5"/><rect x="6.0" y="238.5" width="3" height="3" fill="#fff" stroke="#2a6ad0" stroke-width="0.9"/><rect x="21.0" y="224.0" width="3" height="3" fill="#fff" stroke="#2a6ad0" stroke-width="0.9"/></g>
<g shape-rendering="geometricPrecision"><path d="M6.5 272.5 L23.5 255.5" stroke="#808080" stroke-width="1.5"/><rect x="5.0" y="271.0" width="3" height="3" fill="#fff" stroke="#2a6ad0" stroke-width="0.9"/><rect x="14.0" y="262.0" width="3" height="3" fill="#fff" stroke="#2a6ad0" stroke-width="0.9"/><rect x="22.0" y="254.0" width="3" height="3" fill="#fff" stroke="#2a6ad0" stroke-width="0.9"/></g>
<g shape-rendering="geometricPrecision"><path d="M5.5 297.5 L16.5 290 M7.5 286 L16.5 290 L24 301.5 M16.5 290 L24.5 295" stroke="#808080" stroke-width="1.5" fill="none"/><rect x="4.0" y="296.5" width="3" height="3" fill="#fff" stroke="#2a6ad0" stroke-width="0.9"/><rect x="6.0" y="284.5" width="3" height="3" fill="#fff" stroke="#2a6ad0" stroke-width="0.9"/><rect x="15.0" y="288.5" width="3" height="3" fill="#fff" stroke="#2a6ad0" stroke-width="0.9"/><rect x="22.5" y="294.0" width="3" height="3" fill="#fff" stroke="#2a6ad0" stroke-width="0.9"/><rect x="22.0" y="300.0" width="3" height="3" fill="#fff" stroke="#2a6ad0" stroke-width="0.9"/></g>
<g shape-rendering="geometricPrecision"><rect x="5.5" y="314.5" width="19" height="18" fill="#ffd700" stroke="#a08000" stroke-width="0.6"/><rect x="4.0" y="313.0" width="3" height="3" fill="#fff" stroke="#2a6ad0" stroke-width="0.9"/><rect x="23.0" y="313.0" width="3" height="3" fill="#fff" stroke="#2a6ad0" stroke-width="0.9"/><rect x="4.0" y="331.0" width="3" height="3" fill="#fff" stroke="#2a6ad0" stroke-width="0.9"/><rect x="23.0" y="331.0" width="3" height="3" fill="#fff" stroke="#2a6ad0" stroke-width="0.9"/></g>
<g shape-rendering="geometricPrecision"><ellipse cx="15.5" cy="354.5" rx="10" ry="5.8" fill="#ffd700" stroke="#b89000" stroke-width="0.6"/><rect x="14.0" y="347.0" width="3" height="3" fill="#fff" stroke="#2a6ad0" stroke-width="0.9"/></g>
<g shape-rendering="geometricPrecision"><path d="M8.5 391.5 V378 C8.5 375 10 373.5 13 373.5" fill="none" stroke="#222" stroke-width="3.6"/><path d="M8.5 391.5 V378 C8.5 375 10 373.5 13 373.5" fill="none" stroke="#ffd700" stroke-width="2"/><path d="M6 380.5 H12" stroke="#222" stroke-width="3.4"/><path d="M6.5 380.5 H11.5" stroke="#ffd700" stroke-width="1.6"/><path d="M15.5 373.5 H23.5 M19.5 373.5 V391.5 M15.5 391.5 H23.5" fill="none" stroke="#222" stroke-width="3.4"/><path d="M16 373.5 H23 M19.5 374 V391 M16 391.5 H23" fill="none" stroke="#3aa0e0" stroke-width="1.7"/></g>
<g shape-rendering="geometricPrecision"><path d="M16 406 V420 M9 413 H23 M11 408 L21 418 M21 408 L11 418" stroke="#111" stroke-width="0.9"/><rect x="14.5" y="411.5" width="3" height="3" fill="#fff" stroke="#2a6ad0" stroke-width="0.9"/></g>
<rect x="2" y="431" width="27" height="1" fill="#a0a0a0"/>
<rect x="2" y="432" width="27" height="1" fill="#ffffff"/>
<g shape-rendering="geometricPrecision"><path d="M7.5 442.5 L23.5 458.5 M23.5 442.5 L7.5 458.5" stroke="#8a8a8a" stroke-width="6" stroke-linecap="square"/><path d="M8 443 L23 458 M23 443 L8 458" stroke="#333" stroke-width="3.4" stroke-linecap="square"/></g>
<rect x="2" y="467" width="27" height="1" fill="#a0a0a0"/>
<rect x="2" y="468" width="27" height="1" fill="#ffffff"/>
<g shape-rendering="geometricPrecision"><path d="M15.5 475 V497" stroke="#111" stroke-width="1.3"/><path d="M13.5 478 L5 495 H13.5 Z M17.5 478 L26 495 H17.5 Z" fill="#8a8a8a" stroke="#333" stroke-width="0.6"/></g>
<g shape-rendering="geometricPrecision"><path d="M5 515.5 H27" stroke="#111" stroke-width="1.3"/><path d="M25 506 L9 513.5 H25 Z M25 525 L9 517.5 H25 Z" fill="#8a8a8a" stroke="#333" stroke-width="0.6"/></g>
<defs><linearGradient id="gArr" x1="0" y1="0" x2="1" y2="1"><stop offset="0" stop-color="#777"/><stop offset="1" stop-color="#2a2a2a"/></linearGradient></defs><g shape-rendering="geometricPrecision"><rect x="8.5" y="535" width="14" height="14" fill="url(#gArr)"/><path d="M4.5 535 V556 H25" fill="none" stroke="#222" stroke-width="1.8"/><path d="M5 555.5 L9 550.5" stroke="#222" stroke-width="1.2"/><path d="M26.5 556 L22.5 552.5 V559.5 Z" fill="#222"/></g>
<g fill="#b8b8b8" stroke="#1a1a1a" stroke-width="1.1"><rect x="6.6" y="566.6" width="5.8" height="5.8"/><rect x="13.6" y="566.6" width="5.8" height="5.8"/><rect x="20.6" y="566.6" width="5.8" height="5.8"/><rect x="6.6" y="573.6" width="5.8" height="5.8"/><rect x="13.6" y="573.6" width="5.8" height="5.8"/><rect x="20.6" y="573.6" width="5.8" height="5.8"/><rect x="6.6" y="580.6" width="5.8" height="5.8"/><rect x="13.6" y="580.6" width="5.8" height="5.8"/><rect x="20.6" y="580.6" width="5.8" height="5.8"/></g>
<rect x="0" y="987" width="1920" height="1" fill="#ffffff"/>
<path d="M5 994 L10 999 M10 994 L5 999" stroke="#000" stroke-width="1.8" shape-rendering="geometricPrecision"/>
<g fill="#c8c8c8"><rect x="4" y="1006" width="1" height="8"/><rect x="7" y="1006" width="1" height="8"/><rect x="4" y="1013" width="6" height="1"/></g>
<rect x="20" y="990" width="23" height="25" fill="#a0a0a0" />
<rect x="21" y="991" width="21" height="23" fill="#000000" />
<rect x="46" y="990" width="23" height="25" fill="#a0a0a0" />
<rect x="47" y="991" width="21" height="23" fill="#0000ff" />
<rect x="71" y="990" width="23" height="25" fill="#a0a0a0" />
<rect x="72" y="991" width="21" height="23" fill="#ff0000" />
<rect x="97" y="990" width="23" height="25" fill="#a0a0a0" />
<rect x="98" y="991" width="21" height="23" fill="#00ff00" />
<rect x="122" y="990" width="23" height="25" fill="#a0a0a0" />
<rect x="123" y="991" width="21" height="23" fill="#fa8072" />
<rect x="148" y="990" width="23" height="25" fill="#a0a0a0" />
<rect x="149" y="991" width="21" height="23" fill="#ffff00" />
<rect x="173" y="990" width="23" height="25" fill="#a0a0a0" />
<rect x="174" y="991" width="21" height="23" fill="#1e90ff" />
<rect x="199" y="990" width="23" height="25" fill="#a0a0a0" />
<rect x="200" y="991" width="21" height="23" fill="#8b3a0e" />
<rect x="224" y="990" width="23" height="25" fill="#a0a0a0" />
<rect x="225" y="991" width="21" height="23" fill="#808000" />
<rect x="250" y="990" width="23" height="25" fill="#a0a0a0" />
<rect x="251" y="991" width="21" height="23" fill="#008060" />
<rect x="275" y="990" width="23" height="25" fill="#a0a0a0" />
<rect x="276" y="991" width="21" height="23" fill="#ff4500" />
<rect x="301" y="990" width="23" height="25" fill="#a0a0a0" />
<rect x="302" y="991" width="21" height="23" fill="#400080" />
<rect x="326" y="990" width="23" height="25" fill="#a0a0a0" />
<rect x="327" y="991" width="21" height="23" fill="#ffd0da" />
<rect x="352" y="990" width="23" height="25" fill="#a0a0a0" />
<rect x="353" y="991" width="21" height="23" fill="#b0a0f8" />
<rect x="377" y="990" width="23" height="25" fill="#a0a0a0" />
<rect x="378" y="991" width="21" height="23" fill="#d4f8a0" />
<rect x="403" y="990" width="23" height="25" fill="#a0a0a0" />
<rect x="404" y="991" width="21" height="23" fill="#fa9058" />
<rect x="428" y="990" width="23" height="25" fill="#a0a0a0" />
<rect x="429" y="991" width="21" height="23" fill="#d87090" />
<rect x="454" y="990" width="23" height="25" fill="#a0a0a0" />
<rect x="455" y="991" width="21" height="23" fill="#8070dc" />
<rect x="479" y="990" width="23" height="25" fill="#a0a0a0" />
<rect x="480" y="991" width="21" height="23" fill="#70d870" />
<rect x="505" y="990" width="23" height="25" fill="#a0a0a0" />
<rect x="506" y="991" width="21" height="23" fill="#b0a078" />
<rect x="21" y="991" width="22" height="23" fill="#000000" />
<rect x="0" y="1018" width="1920" height="1" fill="#a0a0a0"/>
<rect x="0" y="1019" width="1920" height="1" fill="#ffffff"/>
<rect x="0" y="1020" width="1920" height="20" fill="#f0f0f0" />
<rect x="0.5" y="1022.5" width="1146" height="17" fill="none" stroke="#a0a0a0"/>
<rect x="1" y="1023" width="1145" height="1" fill="#fafafa"/>
<rect x="1" y="1023" width="1" height="16" fill="#fafafa"/>
<rect x="1147" y="1021" width="1" height="19" fill="#fafafa"/>
<rect x="1148" y="1021" width="1" height="19" fill="#fafafa"/>
<rect x="1149.5" y="1022.5" width="20" height="17" fill="none" stroke="#a0a0a0"/>
<rect x="1150" y="1023" width="19" height="1" fill="#fafafa"/>
<rect x="1150" y="1023" width="1" height="16" fill="#fafafa"/>
<rect x="1170" y="1021" width="1" height="19" fill="#fafafa"/>
<rect x="1171" y="1021" width="1" height="19" fill="#fafafa"/>
<rect x="1172.5" y="1022.5" width="187" height="17" fill="none" stroke="#a0a0a0"/>
<rect x="1173" y="1023" width="186" height="1" fill="#fafafa"/>
<rect x="1173" y="1023" width="1" height="16" fill="#fafafa"/>
<rect x="1360" y="1021" width="1" height="19" fill="#fafafa"/>
<rect x="1361" y="1021" width="1" height="19" fill="#fafafa"/>
<rect x="1362.5" y="1022.5" width="320" height="17" fill="none" stroke="#a0a0a0"/>
<rect x="1363" y="1023" width="319" height="1" fill="#fafafa"/>
<rect x="1363" y="1023" width="1" height="16" fill="#fafafa"/>
<rect x="1683" y="1021" width="1" height="19" fill="#fafafa"/>
<rect x="1684" y="1021" width="1" height="19" fill="#fafafa"/>
<rect x="1685.5" y="1022.5" width="235" height="17" fill="none" stroke="#a0a0a0"/>
<rect x="1686" y="1023" width="234" height="1" fill="#fafafa"/>
<rect x="1686" y="1023" width="1" height="16" fill="#fafafa"/>
<rect x="1921" y="1021" width="1" height="19" fill="#fafafa"/>
<rect x="1922" y="1021" width="1" height="19" fill="#fafafa"/>
<text x="2" y="1034.5" font-size="12" fill="#000" textLength="506" lengthAdjust="spacingAndGlyphs" >--- *Welcome to use the Laser system of cutting,Propose the display area 1024*768 or higher *---</text>
<text x="1177" y="1034.5" font-size="12" fill="#000" textLength="146" lengthAdjust="spacingAndGlyphs" >General mode,Total count:0</text>
<text x="1364.5" y="1034.5" font-size="12" fill="#000" textLength="245" lengthAdjust="spacingAndGlyphs" >1 curve object,unnamed,SizeX139.700,Y215.900</text>
<text x="1687" y="1034.5" font-size="12" fill="#000" textLength="178" lengthAdjust="spacingAndGlyphs" >644XS,X:342.252mm,Y:258.634mm</text>
<defs><linearGradient id="gTask" x1="0" y1="0" x2="1" y2="0"><stop offset="0" stop-color="#1f1c1b"/><stop offset="0.36" stop-color="#221e1c"/><stop offset="0.43" stop-color="#2d2420"/><stop offset="0.49" stop-color="#25201e"/><stop offset="0.6" stop-color="#211d1c"/><stop offset="1" stop-color="#1f1c1b"/></linearGradient></defs>
<rect x="0" y="1040" width="1920" height="40" fill="url(#gTask)" />
<g fill="#ffffff"><path d="M16 1052.5 L22.5 1051.6 V1059.3 H16 Z"/><path d="M23.5 1051.4 L32 1050.2 V1059.3 H23.5 Z"/><path d="M16 1060.3 H22.5 V1068 L16 1067.1 Z"/><path d="M23.5 1060.3 H32 V1069.4 L23.5 1068.2 Z"/></g>
<rect x="48" y="1040" width="287" height="40" fill="#f0f0f0" />
<g shape-rendering="geometricPrecision"><circle cx="69" cy="1057" r="6.3" fill="none" stroke="#222" stroke-width="1.5"/><path d="M64.5 1061.5 L59.5 1066.5" stroke="#222" stroke-width="1.7"/></g>
<text x="88" y="1066.5" font-size="15.5" fill="#222" textLength="128" lengthAdjust="spacingAndGlyphs" >Type here to search</text>
<defs><radialGradient id="gSky" cx="0.45" cy="0.75" r="0.7"><stop offset="0" stop-color="#fbe7a8"/><stop offset="0.55" stop-color="#e8e4c0"/><stop offset="1" stop-color="#9fd4ee"/></radialGradient><clipPath id="srch"><rect x="48" y="1040" width="287" height="40"/></clipPath></defs>
<g shape-rendering="geometricPrecision" clip-path="url(#srch)"><path d="M262 1080 C256 1062 264 1046 285 1042 C305 1039 330 1043 334 1058 C337 1068 335 1076 333 1080 Z" fill="url(#gSky)"/><path d="M258 1080 C261 1076 266 1074 272 1075 C276 1072 282 1072 287 1074 C292 1071 300 1072 305 1074 C311 1071 318 1072 323 1075 C329 1074 334 1077 336 1080 Z" fill="#5ba132"/><path d="M262 1079 C266 1076 272 1076 276 1077 M290 1076 C296 1075 300 1076 304 1078" stroke="#3d7a20" stroke-width="1.2" fill="none"/><path d="M265 1073 C267 1063 273 1056 285 1050 L279 1052 C276 1060 272 1066 265 1073 Z" fill="#7a5c4c"/><path d="M284 1051 C276 1056 270 1064 266 1073 L290 1063 Z" fill="#9a7a64" stroke="#5a4030" stroke-width="0.7"/><path d="M298 1042 C308 1047 316 1056 318 1066 L304 1062 L296 1050 Z" fill="#8a6a58" stroke="#5a4030" stroke-width="0.7"/><ellipse cx="297" cy="1061" rx="10" ry="7" transform="rotate(25 297 1061)" fill="#6e6a66"/><circle cx="286" cy="1054" r="4.6" fill="#9a9690"/><circle cx="284.5" cy="1053" r="1" fill="#222"/><path d="M289 1057 C292 1060 294 1061 296 1058" stroke="#e09020" stroke-width="2" fill="none"/><circle cx="295" cy="1067" r="3" fill="#c89a50"/></g>
<g fill="none" stroke="#ffffff" stroke-width="1.2"><path d="M352.5 1054.5 V1052.5 H363.5 V1054.5 M352.5 1064.5 V1066.5 H363.5 V1064.5"/><rect x="353.5" y="1056.5" width="9" height="6"/><path d="M366.5 1060 V1067"/></g>
<rect x="365.5" y="1056" width="2.2" height="2.2" fill="#fff"/>
<g shape-rendering="geometricPrecision"><circle cx="411" cy="1060" r="11" fill="#db4437"/><path d="M411 1060 L420.5 1054.5 A11 11 0 0 1 416.5 1069.5 Z" fill="#f4b400"/><path d="M411 1060 L416.5 1069.5 A11 11 0 0 1 400.5 1063 L400 1055 Z" fill="#0f9d58"/><circle cx="411" cy="1060" r="4.8" fill="#fff"/><circle cx="411" cy="1060" r="3.8" fill="#4285f4"/><circle cx="417" cy="1065" r="7" fill="#4aa0a8"/><ellipse cx="417" cy="1062.5" rx="5.5" ry="3" fill="#f0f0f0"/><rect x="413" y="1063.5" width="9" height="2.5" fill="#222"/></g>
<rect x="391" y="1078" width="40" height="2" fill="#76b9ed"/>
<g shape-rendering="geometricPrecision"><path d="M449 1051.5 H456 L458 1053.5 H470 V1068 H449 Z" fill="#f0c040"/><rect x="449" y="1055" width="21" height="13" fill="#ffd860"/><path d="M455 1063 H464 V1068 H461.5 V1065.5 H457.5 V1068 H455 Z" fill="#2a7ad0"/></g>
<rect x="440" y="1078" width="40" height="2" fill="#76b9ed"/>
<g shape-rendering="geometricPrecision"><path d="M500 1054 L513 1049 L521 1054 V1067 H500 Z" fill="#1a6ad0"/><path d="M503 1052 L515 1048 L521 1053 L509 1059 Z" fill="#5ac8fa"/><path d="M500 1058 L521 1067 H500 Z" fill="#40a8f0"/><rect x="496" y="1058" width="9" height="9" rx="1.5" fill="#0a4ab0"/><circle cx="500.5" cy="1062.5" r="2.5" fill="none" stroke="#fff" stroke-width="1.2"/></g>
<g shape-rendering="geometricPrecision"><rect x="547" y="1049.5" width="21" height="20.5" rx="3" fill="#330000"/><text x="557.5" y="1064.5" font-size="12" font-weight="bold" fill="#ff9a00" text-anchor="middle" textLength="14" lengthAdjust="spacingAndGlyphs">Ai</text></g>
<g shape-rendering="geometricPrecision"><rect x="596" y="1049.5" width="21" height="20.5" rx="3" fill="#330000"/><text x="606.5" y="1064.5" font-size="12" font-weight="bold" fill="#ff9a00" text-anchor="middle" textLength="14" lengthAdjust="spacingAndGlyphs">Ai</text></g>
<rect x="632" y="1040" width="48" height="40" fill="#4a4745" />
<g fill="#ff1a1a" shape-rendering="geometricPrecision"><path d="M656 1048.5 L658 1055.5 L666.5 1058 L658.5 1060.5 L656 1066 L653.5 1060.5 L645.5 1058 L654 1055.5 Z"/><path d="M645.5 1059.5 L653 1062 L654.5 1070 Z"/><path d="M666.5 1059.5 L659 1062 L657.5 1070 Z"/></g>
<rect x="632" y="1078" width="48" height="2" fill="#76b9ed"/>
<g shape-rendering="geometricPrecision"><rect x="696" y="1048.5" width="18" height="23" rx="1.5" fill="#4a4a4a" stroke="#777" stroke-width="0.6"/><rect x="698" y="1050.5" width="14" height="4" fill="#5ac8fa"/><rect x="698.0" y="1056.5" width="3.8" height="3.8" fill="#d8d8d8"/><rect x="702.8" y="1056.5" width="3.8" height="3.8" fill="#d8d8d8"/><rect x="707.6" y="1056.5" width="3.8" height="3.8" fill="#d8d8d8"/><rect x="698.0" y="1061.3" width="3.8" height="3.8" fill="#d8d8d8"/><rect x="702.8" y="1061.3" width="3.8" height="3.8" fill="#d8d8d8"/><rect x="698.0" y="1066.1" width="3.8" height="3.8" fill="#d8d8d8"/><rect x="702.8" y="1066.1" width="3.8" height="3.8" fill="#d8d8d8"/><rect x="707.6" y="1061.3" width="3.8" height="8.6" fill="#1a5ab0"/></g>
<rect x="685" y="1078" width="40" height="2" fill="#76b9ed"/>
<defs><radialGradient id="gSun" cx="0.45" cy="0.4" r="0.6"><stop offset="0" stop-color="#ffd000"/><stop offset="1" stop-color="#ff8800"/></radialGradient></defs>
<g shape-rendering="geometricPrecision"><circle cx="1618" cy="1060" r="10" fill="url(#gSun)"/><circle cx="1624" cy="1054" r="5.5" fill="#d03030"/><text x="1624" y="1057.5" font-size="8" font-weight="bold" fill="#fff" text-anchor="middle">4</text></g>
<text x="1638" y="1066" font-size="14.5" fill="#ffffff" textLength="27" lengthAdjust="spacingAndGlyphs" >79°F</text>
<text x="1674" y="1066" font-size="14.5" fill="#ffffff" textLength="38" lengthAdjust="spacingAndGlyphs" >Sunny</text>
<path d="M1737.5 1064 L1743 1058.5 L1748.5 1064" fill="none" stroke="#fff" stroke-width="1.2" shape-rendering="geometricPrecision"/>
<g shape-rendering="geometricPrecision" fill="none" stroke="#fff" stroke-width="1.1"><path d="M1758.5 1057.5 H1761.5 L1765.5 1053.5 V1066.5 L1761.5 1062.5 H1758.5 Z"/><path d="M1768 1057 Q1770 1060 1768 1063 M1770.5 1055 Q1774 1060 1770.5 1065 M1773 1053 Q1777.5 1060 1773 1067" stroke="#aaa"/></g>
<g shape-rendering="geometricPrecision" fill="none" stroke="#fff" stroke-width="1.3"><path d="M1786 1062 A12 12 0 0 1 1798 1054 M1789 1064 A8 8 0 0 1 1797 1058 M1792 1066 A4.5 4.5 0 0 1 1796.5 1062"/></g>
<circle cx="1797" cy="1066" r="1.3" fill="#fff"/>
<text x="1834.5" y="1055.5" font-size="12.5" fill="#ffffff" text-anchor="middle" textLength="42" lengthAdjust="spacingAndGlyphs" >4:50 PM</text>
<text x="1835" y="1073.5" font-size="12.5" fill="#ffffff" text-anchor="middle" textLength="52" lengthAdjust="spacingAndGlyphs" >4/17/2026</text>
<g shape-rendering="geometricPrecision"><path d="M1879.5 1052.5 H1894.5 V1063.5 H1884 L1880 1067 V1063.5 H1879.5 Z" fill="#fff"/><path d="M1882 1055.5 H1892 M1882 1058.5 H1892 M1882 1061 H1889" stroke="#222" stroke-width="0.8"/><circle cx="1894" cy="1067" r="6.3" fill="#2a2a2a" stroke="#888" stroke-width="0.9"/><text x="1894" y="1071" font-size="9.5" font-weight="bold" fill="#fff" text-anchor="middle">4</text></g>
<rect x="1915" y="1040" width="1" height="40" fill="#505050"/>
</svg>
</body></html>
